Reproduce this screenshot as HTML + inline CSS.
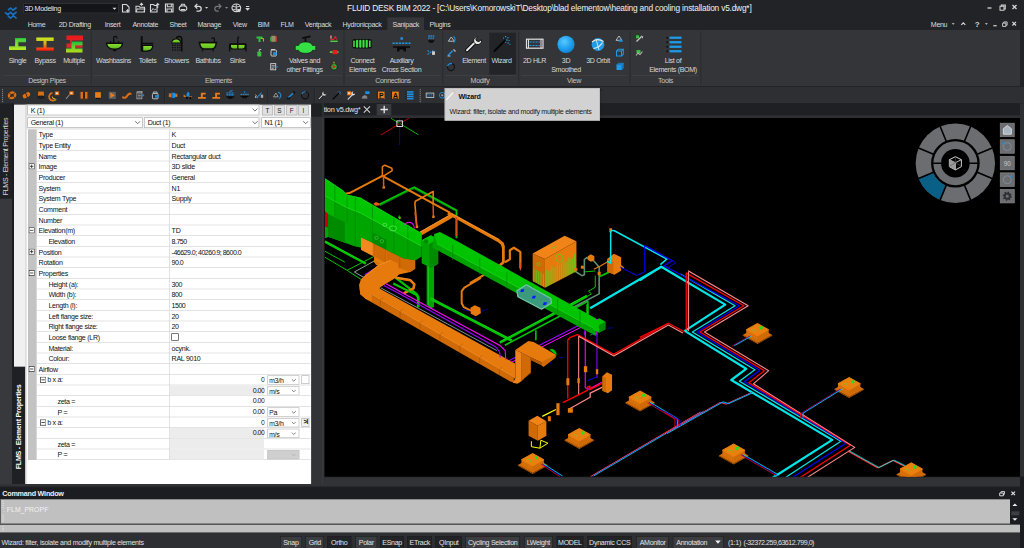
<!DOCTYPE html>
<html lang="en">
<head>
<meta charset="utf-8">
<title>FLUID DESK BIM 2022</title>
<style>
*{box-sizing:border-box;margin:0;padding:0}
html,body{width:1024px;height:548px;overflow:hidden;background:#212327}
body{font-family:"Liberation Sans",sans-serif;font-size:12px;color:#e4e4e4}
#root{position:absolute;left:0;top:0;width:1536px;height:822px;transform:scale(.666667);transform-origin:0 0;background:#212327;overflow:hidden}
.abs{position:absolute}
/* ---------- title ---------- */
#title{position:absolute;left:0;top:0;width:1536px;height:45px;background:#212327}
#wscombo{position:absolute;left:35px;top:4px;width:143px;height:16px;background:#141518;border:1px solid #3c3d40;color:#e8e8e8;font-size:12px;line-height:14px;padding-left:2px}
#apptitle{position:absolute;left:592px;top:4px;font-size:13.5px;color:#f0f0f0;white-space:nowrap;letter-spacing:-.1px}
.mtab{position:absolute;top:27.3px;height:19px;line-height:19px;font-size:10.6px;letter-spacing:-.5px;color:#dcdcdc;white-space:nowrap;text-align:center}
/* ---------- ribbon ---------- */
#ribbon{position:absolute;left:0;top:45px;width:1530px;height:84px;background:#343538}
.rlab{position:absolute;font-size:10.6px;letter-spacing:-.5px;color:#d9d9d9;white-space:nowrap;text-align:center;line-height:16px;transform:translateX(-50%)}
.plab{position:absolute;top:67px;font-size:12px;color:#c8c8c8;white-space:nowrap;text-align:center;line-height:16px;transform:translateX(-50%)}
.psep{position:absolute;top:2px;width:2px;height:80px;background:#2c2d30}
.rlab.pl{color:#c4c4c4}
.pline{position:absolute;top:68px;height:1px;background:#444548}
/* ---------- toolbar ---------- */
#toolbar{position:absolute;left:0;top:129px;width:1536px;height:26px;background:#2e2f32;border-top:1px solid #1e1f22}
/* ---------- left panel ---------- */
#lpanel{position:absolute;left:0;top:155px;width:485px;height:576px;background:#38393c}
.vtab{position:absolute;color:#e0e0e0;font-size:12px;white-space:nowrap;transform-origin:0 0;transform:rotate(-90deg)}
#pgrid{position:absolute;left:42px;top:195px;width:424px;font-size:11.5px;color:#111}
.row{position:relative;height:16px;border-bottom:1px solid #d8d8d8;background:#fff;margin-left:13px;line-height:15px;white-space:nowrap}
.row .n{position:absolute;left:0;top:0;width:199px;height:15px;border-right:1px solid #d8d8d8;padding-left:9px;overflow:hidden}
.row .v{position:absolute;left:199px;top:0;right:0;height:15px;padding-left:4px;overflow:hidden}
.row .n.i1{padding-left:24px}
.row .n.i2{padding-left:40px}
.pm{position:absolute;left:-11px;top:3px;width:9px;height:9px;border:1px solid #555;background:#fff}
.pm:before{content:"";position:absolute;left:1px;top:3px;width:5px;height:1px;background:#333}
.pm.plus:after{content:"";position:absolute;left:3px;top:1px;width:1px;height:5px;background:#333}
.num{letter-spacing:-.8px}
.gt{font-size:10.6px;letter-spacing:-.42px;color:#111;overflow:hidden}
/* ---------- status ---------- */
.sbtn{position:absolute;top:803px;height:18px;line-height:18px;font-size:11.5px;color:#e6e6e6;background:#3f4043;text-align:center;white-space:nowrap}
</style>
</head>
<body>
<div id="root">

<!-- TITLE -->
<div id="title">
<svg style="position:absolute;left:6px;top:9px;overflow:visible" width="21" height="21" viewBox="0 0 14 14" ><g fill="none" stroke="#1673c4" stroke-width="1.600" stroke-linejoin="miter"><path d="M4 4.200 6.500 2 9 4.200 12.600 1.500"/><path d="M1 6.300 3.800 8.700 6.500 6.300 9.200 8.700 12.600 5.900"/><path d="M4 9.900 6.500 12.100 9.300 9.700 12.600 12.400"/></g></svg>
<div style="position:absolute;left:34.5px;top:4.5px;width:143.25px;height:15.75px;background:#141518;border:1px solid #3a3b3e"></div>
<div id="wstext" style="position:absolute;left:36.75px;top:3.9px;font-size:10.6px;line-height:16.5px;color:#ececec;white-space:nowrap;letter-spacing:-.45px">3D Modeling</div>
<svg style="position:absolute;left:168px;top:10.5px;overflow:visible" width="7.5" height="4.5" viewBox="0 0 5 3" ><path d="M0.5 0.5h4l-2 2z" fill="#e0e0e0"/></svg>
<svg style="position:absolute;left:0px;top:0px;overflow:visible" width="390" height="24" viewBox="0 0 260 16" ><path d="M122.5 4.5h4l2.5 2.5v5h-6.5z" fill="none" stroke="#d6d6d6" stroke-width="1.1"/><path d="M127.5 9.2v3M126 10.7h3" stroke="#d6d6d6" stroke-width="1"/><path d="M136 12V6.3h3l1 1h4.5V12z" fill="none" stroke="#d6d6d6" stroke-width="1.1"/><path d="M141.5 5.8V3.5M140 4.8l1.5-1.5 1.5 1.5" stroke="#d6d6d6" stroke-width="1" fill="none"/><path d="M136 12l1.2-3h7.6L144 12" fill="none" stroke="#d6d6d6" stroke-width="1"/><path d="M150.5 12V4.5h3l1 1h2.5V12z" fill="none" stroke="#d6d6d6" stroke-width="1.1"/><path d="M157.7 8V3.6M156.2 5l1.5-1.5 1.5 1.5" stroke="#d6d6d6" stroke-width="1" fill="none"/><path d="M151 11.5l2-3 1.5 1.5 1.5-1" stroke="#d6d6d6" stroke-width=".9" fill="none"/><path d="M165.5 4h7.5v8h-7.5z" fill="none" stroke="#d6d6d6" stroke-width="1.2"/><path d="M167.3 4v2.8h4V4M167 12V9h4.6v3" fill="none" stroke="#d6d6d6" stroke-width="1"/><ellipse cx="183" cy="8.3" rx="3.8" ry="2.6" fill="none" stroke="#d6d6d6" stroke-width="1.1"/><path d="M180.6 6.5l1-2.3h2.8l1 2.3M181 9.5h4" fill="none" stroke="#d6d6d6" stroke-width="1"/><path d="M195.5 6.3h3.3a2.4 2.4 0 0 1 0 4.8h-2.3" fill="none" stroke="#d6d6d6" stroke-width="1.3"/><path d="M197.3 4 195 6.3l2.3 2.3" fill="none" stroke="#d6d6d6" stroke-width="1.3"/><path d="M205 7h3.2l-1.6 1.8z" fill="#cfcfcf"/><path d="M220.5 6.3h-3.3a2.4 2.4 0 0 0 0 4.8h1.5" fill="none" stroke="#77787b" stroke-width="1.2"/><path d="M218.7 4 221 6.3l-2.3 2.3" fill="none" stroke="#77787b" stroke-width="1.2"/><path d="M225 7h3.2l-1.6 1.8z" fill="#8a8b8e"/><ellipse cx="236.3" cy="7.8" rx="4.3" ry="3.8" fill="none" stroke="#d6d6d6" stroke-width="1.2"/><path d="M232.5 6.3q3.8 1.6 7.6 0M233 9.8q3.3-1.6 6.6 0M236.3 4v7.6" fill="none" stroke="#d6d6d6" stroke-width=".9"/><circle cx="239" cy="10.6" r="1.7" fill="#d6d6d6"/><path d="M246 6.5h3.2M246.3 8.6h2.6l-1.3 1.5z" stroke="#d6d6d6" stroke-width="1" fill="#d6d6d6"/></svg>
<div id="apptitle" style="position:absolute;left:520.5px;top:3.3px;font-size:12.5px;line-height:19.5px;color:#f2f2f2;white-space:nowrap;letter-spacing:-.3px">FLUID DESK BIM 2022 - [C:\Users\KomorowskiT\Desktop\blad elementow\heating and cooling installation v5.dwg*]</div>
<svg style="position:absolute;left:1470px;top:0px;overflow:visible" width="66" height="24" viewBox="0 0 44 16" ><path d="M7.5 8h4" stroke="#d6d6d6" stroke-width="1.3"/><path d="M20 6.3h4v4h-4z M21.3 6.3V5h4v4h-1.3" fill="none" stroke="#d6d6d6" stroke-width="1"/><path d="M32.5 5l4 4m0-4l-4 4" stroke="#d6d6d6" stroke-width="1.3"/></svg>
<div style="position:absolute;left:581.25px;top:25.95px;width:54.75px;height:19.5px;background:#343538"></div>
<div class="mtab" id="mt0" style="left:54.75px;transform:translateX(-50%)">Home</div>
<div class="mtab" id="mt1" style="left:112.2px;transform:translateX(-50%)">2D Drafting</div>
<div class="mtab" id="mt2" style="left:168.75px;transform:translateX(-50%)">Insert</div>
<div class="mtab" id="mt3" style="left:217.95px;transform:translateX(-50%)">Annotate</div>
<div class="mtab" id="mt4" style="left:267px;transform:translateX(-50%)">Sheet</div>
<div class="mtab" id="mt5" style="left:313.95px;transform:translateX(-50%)">Manage</div>
<div class="mtab" id="mt6" style="left:359.7px;transform:translateX(-50%)">View</div>
<div class="mtab" id="mt7" style="left:395.25px;transform:translateX(-50%)">BIM</div>
<div class="mtab" id="mt8" style="left:430.5px;transform:translateX(-50%)">FLM</div>
<div class="mtab" id="mt9" style="left:477px;transform:translateX(-50%)">Ventpack</div>
<div class="mtab" id="mt10" style="left:543px;transform:translateX(-50%)">Hydronicpack</div>
<div class="mtab" id="mt11" style="left:608.55px;transform:translateX(-50%)">Sanipack</div>
<div class="mtab" id="mt12" style="left:660px;transform:translateX(-50%)">Plugins</div>
<div class="mtab" id="mtmenu" style="left:1408.5px;transform:translateX(-50%)">Menu</div>
<svg style="position:absolute;left:1422px;top:25.5px;overflow:visible" width="114" height="19.5" viewBox="0 0 76 13" ><path d="M3.700 5.800h3l-1.500 1.600z" fill="#d6d6d6"/><path d="M13.300 7.600l2-2 2 2" fill="none" stroke="#d6d6d6" stroke-width="1.200"/><text x="26.800" y="9.600" font-family="Liberation Sans,sans-serif" font-size="8" font-weight="bold" fill="#d6d6d6">?</text><path d="M36.900 5.800h3l-1.500 1.600z" fill="#d6d6d6"/><path d="M45.300 8.400h3.400" stroke="#d6d6d6" stroke-width="1.200"/><path d="M54.600 5.800h3.300v3.300h-3.300z M55.800 5.800V4.600h3.300v3.300h-1.200" fill="none" stroke="#d6d6d6" stroke-width=".9"/><path d="M64.400 4.600l3.600 3.600m0-3.600l-3.600 3.600" stroke="#d6d6d6" stroke-width="1.200"/></svg>
</div>

<!-- RIBBON -->
<div id="ribbon">
<div style="position:absolute;left:733.5px;top:3.75px;width:40.5px;height:63px;background:#232427"></div>
<div class="psep" style="left:135.75px"></div>
<div class="psep" style="left:515.25px"></div>
<div class="psep" style="left:663px"></div>
<div class="psep" style="left:777px"></div>
<div class="psep" style="left:943.5px"></div>
<div class="psep" style="left:1050px"></div>
<div class="pline" style="left:4.5px;width:129px"></div>
<div class="pline" style="left:139.5px;width:373.5px"></div>
<div class="pline" style="left:519px;width:141px"></div>
<div class="pline" style="left:667.5px;width:106.5px"></div>
<div class="pline" style="left:781.5px;width:159px"></div>
<div class="pline" style="left:948px;width:99px"></div>
<div class="rlab" style="left:26.25px;top:45.75px;margin-top:-8px">Single</div>
<div class="rlab" style="left:67.5px;top:45.75px;margin-top:-8px">Bypass</div>
<div class="rlab" style="left:111px;top:45.75px;margin-top:-8px">Multiple</div>
<div class="rlab" style="left:170.25px;top:45.75px;margin-top:-8px">Washbasins</div>
<div class="rlab" style="left:221.25px;top:45.75px;margin-top:-8px">Toilets</div>
<div class="rlab" style="left:264.75px;top:45.75px;margin-top:-8px">Showers</div>
<div class="rlab" style="left:312px;top:45.75px;margin-top:-8px">Bathtubs</div>
<div class="rlab" style="left:356.25px;top:45.75px;margin-top:-8px">Sinks</div>
<div class="rlab" style="left:711px;top:45.75px;margin-top:-8px">Element</div>
<div class="rlab" style="left:752.25px;top:45.75px;margin-top:-8px">Wizard</div>
<div class="rlab" style="left:801.75px;top:45.75px;margin-top:-8px">2D HLR</div>
<div class="rlab" style="left:897px;top:45.75px;margin-top:-8px">3D Orbit</div>
<div class="rlab" style="left:456.75px;top:45.75px;margin-top:-8px">Valves and</div>
<div class="rlab" style="left:456.75px;top:58.5px;margin-top:-8px">other Fittings</div>
<div class="rlab" style="left:543.75px;top:45.75px;margin-top:-8px">Connect</div>
<div class="rlab" style="left:543.75px;top:58.5px;margin-top:-8px">Elements</div>
<div class="rlab" style="left:602.25px;top:45.75px;margin-top:-8px">Auxiliary</div>
<div class="rlab" style="left:602.25px;top:58.5px;margin-top:-8px">Cross Section</div>
<div class="rlab" style="left:849px;top:45.75px;margin-top:-8px">3D</div>
<div class="rlab" style="left:849px;top:58.5px;margin-top:-8px">Smoothed</div>
<div class="rlab" style="left:1009.5px;top:45.75px;margin-top:-8px">List of</div>
<div class="rlab" style="left:1009.5px;top:58.5px;margin-top:-8px">Elements (BOM)</div>
<div class="rlab pl" style="left:70.5px;top:75.75px;margin-top:-8px">Design Pipes</div>
<div class="rlab pl" style="left:327.75px;top:75.75px;margin-top:-8px">Elements</div>
<div class="rlab pl" style="left:589.5px;top:75.75px;margin-top:-8px">Connections</div>
<div class="rlab pl" style="left:720px;top:75.75px;margin-top:-8px">Modify</div>
<div class="rlab pl" style="left:861px;top:75.75px;margin-top:-8px">View</div>
<div class="rlab pl" style="left:998.25px;top:75.75px;margin-top:-8px">Tools</div>
<svg style="position:absolute;left:0;top:0" width="1536" height="84" viewBox="0 30 1024 56"><defs>
<linearGradient id="gG" x1="0" y1="0" x2="0" y2="1"><stop offset="0" stop-color="#22c33a"/><stop offset="1" stop-color="#b8e61c"/></linearGradient>
<linearGradient id="gYR" x1="0" y1="0" x2="0" y2="1"><stop offset="0" stop-color="#c6ee20"/><stop offset=".5" stop-color="#e0a018"/><stop offset="1" stop-color="#ff1010"/></linearGradient>
<linearGradient id="gR" x1="0" y1="0" x2="0" y2="1"><stop offset="0" stop-color="#f01818"/><stop offset="1" stop-color="#c83030"/></linearGradient>
<linearGradient id="gB" x1="0" y1="0" x2="0" y2="1"><stop offset="0" stop-color="#8fe030"/><stop offset="1" stop-color="#58b820"/></linearGradient>
<radialGradient id="gS" cx=".4" cy=".35" r=".7"><stop offset="0" stop-color="#5cc8ff"/><stop offset=".6" stop-color="#1da0f0"/><stop offset="1" stop-color="#1080d0"/></radialGradient>
</defs><path d="M9 46.3h6V38h11v4.3h-7.6v4H26v3.8H9z" fill="url(#gG)"/><path d="M9 48.2h17M16.7 46.5V40h9.3" stroke="#d8f060" stroke-width=".5" fill="none" opacity=".7"/><path d="M36.3 37.6h17.4v3.4h-7.2v6.4h7.2v3.4H36.3v-3.4h7.2V41h-7.2z" fill="url(#gYR)"/><path d="M66.5 36h16v4h-11v3.2h11v4.6h-16v-4.4h3.6v-3.4h-3.6z" fill="url(#gR)"/><path d="M66 48.6h5.5v-7h11v3.6h-7.4v3.4h7.4v3.8H66z" fill="url(#gG)" opacity=".95"/><path d="M66.5 36h16v4h-11v3.5" fill="none" stroke="#e82020" stroke-width="1"/><path d="M106.5 43.2h16q-.6 6-8 6t-8-6z" fill="url(#gB)" stroke="#0c0c0c" stroke-width="1.4"/><path d="M113.7 43v-5.2q0-1.5 1.6-1.5t1.6 1.5v.8M110.5 41v1.6M118.5 41v1.6M113 50.6h3.2" fill="none" stroke="#0c0c0c" stroke-width="1.3"/><path d="M141.7 36.2v15.2" stroke="#0c0c0c" stroke-width="2"/><path d="M141.5 43.5h11.7" stroke="#0c0c0c" stroke-width="1.5"/><path d="M142.6 45.3h10.2q-.3 5.8-6 5.8h-4.2z" fill="url(#gB)" stroke="#0c0c0c" stroke-width="1.3"/><path d="M181.8 51.5V39q0-2.6-2.6-2.6t-2.8 2.4" fill="none" stroke="#0c0c0c" stroke-width="1.5"/><path d="M171.6 43q.4-4 4.6-4t4.6 4z" fill="url(#gB)" stroke="#0c0c0c" stroke-width="1"/><g fill="#0c0c0c"><rect x="172" y="44.6" width="1.3" height="1.3"/><rect x="174.5" y="44.6" width="1.3" height="1.3"/><rect x="177" y="44.6" width="1.3" height="1.3"/><rect x="179.4" y="44.6" width="1.3" height="1.3"/><rect x="172" y="47" width="1.3" height="1.3"/><rect x="174.5" y="47" width="1.3" height="1.3"/><rect x="177" y="47" width="1.3" height="1.3"/><rect x="179.4" y="47" width="1.3" height="1.3"/><rect x="172" y="49.4" width="1.3" height="1.3"/><rect x="174.5" y="49.4" width="1.3" height="1.3"/><rect x="177" y="49.4" width="1.3" height="1.3"/><rect x="179.4" y="49.4" width="1.3" height="1.3"/></g><path d="M199.6 42.6h16.6q-.4 6.4-4.6 6.4h-7.2q-4.4 0-4.8-6.4z" fill="url(#gB)" stroke="#0c0c0c" stroke-width="1.4"/><path d="M214.4 42.4v-3.3q0-1.2-1.3-1.2t-1.3 1.2M203 49.4l-.8 1.8M212.8 49.4l.8 1.8M198.6 42.5h18.6" fill="none" stroke="#0c0c0c" stroke-width="1.3"/><path d="M230.4 44.2h14.8v2.2q0 2.6-2.8 2.6h-9.200q-2.800 0-2.800-2.600z" fill="url(#gB)" stroke="#0c0c0c" stroke-width="1.2"/><path d="M237.800 49V38.400q0-1.600 1.400-1.600M229.600 51.600v-7.600M246 51.600v-7.600M229.200 44.100h17.200M237.800 51.200" fill="none" stroke="#0c0c0c" stroke-width="1.300"/><path d="M256.5 36.500h6v2h-2v3.500h-2v-3.500h-2z" fill="#30c040"/><path d="M261 38.500h2.500v3" stroke="#d0d020" stroke-width=".8" fill="none"/><rect x="257.300" y="51.500" width="4" height="5" rx=".8" fill="#38c040"/><path d="M259.300 51.500v-2h2" stroke="#d8d8d8" stroke-width=".8" fill="none"/><rect x="271.200" y="35.800" width="4.600" height="6" rx=".6" fill="#e07818"/><path d="M272.700 36v5.600M274.200 36v5.600" stroke="#30b0e0" stroke-width=".6"/><path d="M276.400 36.500v5" stroke="#e03030" stroke-width="1"/><path d="M270.600 37v4.400" stroke="#40c040" stroke-width=".8"/><rect x="271" y="50" width="5.400" height="6" rx=".8" fill="none" stroke="#d8d8d8" stroke-width=".9"/><rect x="273" y="52.200" width="3.600" height="3" fill="#1d8fe0"/><path d="M271 49.500h4" stroke="#d8d8d8" stroke-width=".9"/><rect x="270.700" y="63.600" width="5" height="6.200" fill="none" stroke="#d0d0d0" stroke-width=".9"/><path d="M271.600 65.400h3.200M271.600 67h3.200M271.600 68.500h2" stroke="#d0d0d0" stroke-width=".7"/><path d="M275.500 67.500l2.300-1" stroke="#1d8fe0" stroke-width="1"/><path d="M295.300 45.500h3.200q1.200-3.500 7-3.500t7 3.500h3.200v4.800h-3.200q-1.200 3-7 3t-7-3h-3.200z" fill="#34e044" stroke="#0c0c0c" stroke-width=".5"/><path d="M305.500 42v-3.600M302.300 38.200l8.200-1.800" stroke="#0c0c0c" stroke-width="1.700" fill="none"/><path d="M331 35.600v4h2.500l1.800-3 1.500 3" stroke="#e02828" stroke-width="1" fill="none"/><path d="M330.300 41.300h7.400" stroke="#50d040" stroke-width="1.400"/><path d="M331 35.600v3" stroke="#e8e8e8" stroke-width=".8"/><rect x="332.500" y="50" width="4.800" height="4.200" fill="#e02020"/><path d="M329.800 52.100h2.700" stroke="#50d040" stroke-width="1.800"/><path d="M337.300 52.100h1.200" stroke="#50d040" stroke-width="1.800"/><circle cx="334" cy="66.800" r="3.200" fill="#30b838" stroke="#0c0c0c" stroke-width=".6"/><path d="M332.600 64.800l3.600 2-3.600 2z" fill="#e02020"/><path d="M334 63.600v-1.800" stroke="#e0c020" stroke-width="1"/><rect x="352.300" y="39" width="19.500" height="9.600" rx="2" fill="#101010"/><g fill="#38e040"><rect x="353.200" y="40.600" width="1.600" height="6.400"/><rect x="356" y="39.800" width="2.200" height="8" rx="1"/><rect x="359.200" y="39.800" width="2.200" height="8" rx="1"/><rect x="362.400" y="39.800" width="2.200" height="8" rx="1"/><rect x="365.600" y="39.800" width="2.200" height="8" rx="1"/><rect x="369" y="40.600" width="1.600" height="6.400"/></g><rect x="400.500" y="37.300" width="2.400" height="2.400" fill="#1d9be8"/><path d="M392.500 43.300h18" stroke="#1d9be8" stroke-width="1.600" stroke-dasharray="2.200 1"/><path d="M393 46.200h17v1.600h-4v3.600h-2.500v-1.800h-4v1.800H397v-3.600h-4z" fill="#0a0a0a"/><path d="M428.300 36h6M428 38.200h6.600" stroke="#1d8fe0" stroke-width="1.300" stroke-dasharray="1.600 .600"/><path d="M428 40.300h6.500v1.200h-1.500v1.200h-3.500v-1.200H428z" fill="#0a0a0a"/><path d="M427.500 54.500l6.500-4.500M427.500 50.500l3 2" stroke="#1d8fe0" stroke-width="1" stroke-dasharray="1.800 .800"/><rect x="432" y="51.300" width="3" height="3.600" fill="#c8c8c8"/><path d="M448.300 41.200l3-4.200 3 4.200z" fill="none" stroke="#c8c8c8" stroke-width=".9"/><path d="M453.500 36.500a3.600 3.600 0 0 1 0 6" fill="none" stroke="#1d8fe0" stroke-width="1.100"/><path d="M448 55.500l4.600-4.600" stroke="#1d8fe0" stroke-width="1.500"/><path d="M447.500 56h3M453 50h2v2" stroke="#c8c8c8" stroke-width=".9" fill="none"/><circle cx="451" cy="67" r="3.500" fill="none" stroke="#15161a" stroke-width="1.300"/><path d="M447.600 66.200a3.500 3.500 0 0 1 4.300-2.600" fill="none" stroke="#1d8fe0" stroke-width="1.300"/><path d="M467 50.300l8.200-8.200" stroke="#0a0a0a" stroke-width="3.800" stroke-linecap="round"/><path d="M467 50.300l8.200-8.200" stroke="#e8e8e8" stroke-width="2" stroke-linecap="round"/><path d="M481.500 39.600a4 4 0 1 1-3.800-3l-2 2.400 1 2 2.200.600z" fill="#e8e8e8" stroke="#0a0a0a" stroke-width=".9"/><path d="M494.500 51l10.500-10.500" stroke="#050505" stroke-width="1.800" stroke-linecap="round"/><g fill="#2aa0e8"><rect x="505" y="36" width="1.200" height="1.200"/><rect x="507.300" y="37.200" width="1.200" height="1.200"/><rect x="503" y="37.600" width="1" height="1"/><rect x="506.200" y="39.400" width="1.300" height="1.300"/><rect x="508.600" y="40" width="1" height="1"/><rect x="507.600" y="42.400" width="1.200" height="1.200"/><rect x="509.400" y="43.800" width="1" height="1"/><rect x="505.200" y="41.800" width="1" height="1"/></g><rect x="526.500" y="39.200" width="16.500" height="9" fill="none" stroke="#e0e0e0" stroke-width="1.200"/><path d="M528.500 39.200v9M541 39.200v9" stroke="#e0e0e0" stroke-width="1"/><path d="M529.500 42h10.500M529.500 45.500h10.500" stroke="#1d9be8" stroke-width="1.100" stroke-dasharray="2 1"/><circle cx="566" cy="44.300" r="8.600" fill="url(#gS)"/><circle cx="598" cy="44.500" r="6.400" fill="#1d9be8"/><path d="M592 42q5-4.500 11.500-.500M593.500 48.500q6-1 9-6" stroke="#e8e8e8" stroke-width="1.200" fill="none"/><path d="M596 39l3 11" stroke="#e8e8e8" stroke-width=".9"/><path d="M616 40.300l3-4.300 3 4.300z" fill="none" stroke="#c8c8c8" stroke-width=".9"/><path d="M620.500 38.200l2.600 3.600h-4.800z" fill="#1d8fe0"/><path d="M616.500 51h5v5h-5zM616.500 51l1.800-1.800h5l-1.800 1.800M621.500 56l1.800-1.800v-5" fill="none" stroke="#1d9be8" stroke-width="1"/><path d="M616.500 65h5v5h-5z" fill="#1d9be8"/><path d="M616.500 65l1.800-1.800h5l-1.800 1.800zM621.500 70l1.800-1.800v-5l-1.800 1.800z" fill="#1470b8" stroke="#1d9be8" stroke-width=".500"/><path d="M636.500 41.500l5-5" stroke="#c8c8c8" stroke-width="1.300"/><rect x="636" y="35.300" width="3" height="3" fill="#38c040"/><path d="M641 36l1.800.6-.6 1.800" fill="none" stroke="#c8c8c8" stroke-width=".9"/><rect x="636.500" y="50" width="4" height="3" fill="#38c040"/><path d="M636 55.500l2-2.500 2 1.500 2.500-3" stroke="#b8b8b8" stroke-width="1" fill="none"/><rect x="666.500" y="37" width="1.600" height="1.600" fill="#0a0a0a"/><rect x="669.500" y="36.6" width="12" height="2.300" fill="#1d9be8"/><rect x="666.500" y="41.5" width="1.600" height="1.600" fill="#0a0a0a"/><rect x="669.500" y="41.1" width="12" height="2.300" fill="#1d9be8"/><rect x="666.500" y="46" width="1.600" height="1.600" fill="#0a0a0a"/><rect x="669.500" y="45.6" width="12" height="2.300" fill="#1d9be8"/><rect x="666.500" y="50.5" width="1.600" height="1.600" fill="#0a0a0a"/><rect x="669.500" y="50.1" width="12" height="2.300" fill="#1d9be8"/></svg>
</div>

<!-- TOOLBAR -->
<div id="toolbar">
<svg style="position:absolute;left:0;top:-1px" width="1536" height="27" viewBox="0 86 1024 18"><rect x="2.1" y="89.2" width="1" height="1" fill="#9a9a9a"/><rect x="2.1" y="91.2" width="1" height="1" fill="#9a9a9a"/><rect x="2.1" y="93.2" width="1" height="1" fill="#9a9a9a"/><rect x="2.1" y="95.2" width="1" height="1" fill="#9a9a9a"/><rect x="2.1" y="97.2" width="1" height="1" fill="#9a9a9a"/><rect x="2.1" y="99.2" width="1" height="1" fill="#9a9a9a"/><rect x="2.1" y="101.2" width="1" height="1" fill="#9a9a9a"/><rect x="419.7" y="89.2" width="1" height="1" fill="#9a9a9a"/><rect x="419.7" y="91.2" width="1" height="1" fill="#9a9a9a"/><rect x="419.7" y="93.2" width="1" height="1" fill="#9a9a9a"/><rect x="419.7" y="95.2" width="1" height="1" fill="#9a9a9a"/><rect x="419.7" y="97.2" width="1" height="1" fill="#9a9a9a"/><rect x="419.7" y="99.2" width="1" height="1" fill="#9a9a9a"/><rect x="419.7" y="101.2" width="1" height="1" fill="#9a9a9a"/><path d="M164.5 88v15" stroke="#1f2023" stroke-width="1"/><path d="M165.3 88v15" stroke="#3c3d40" stroke-width=".6"/><path d="M268 88v15" stroke="#1f2023" stroke-width="1"/><path d="M268.8 88v15" stroke="#3c3d40" stroke-width=".6"/><path d="M314.3 88v15" stroke="#1f2023" stroke-width="1"/><path d="M315.1 88v15" stroke="#3c3d40" stroke-width=".6"/><g transform="translate(12.1 95.3) scale(.8)"><ellipse rx="4" ry="3.300" transform="rotate(-25)" fill="none" stroke="#dc6e14" stroke-width="3"/><path d="M-3.6 3l2-1.8M1.8-1.6l2-1.800M-3.400-2.600l2.200 1.600M1.600 1.400l2.200 1.600" stroke="#0a0a0a" stroke-width=".8"/></g><g transform="translate(26.4 95.3) scale(.8)"><rect x="-5" y="-2.700" width="10" height="5.400" rx="2.700" transform="rotate(-30)" fill="#dc6e14"/><path d="M-1.200-3.200l2.400 5.800" stroke="#0a0a0a" stroke-width=".9"/></g><g transform="translate(41 95.3) scale(.8)"><rect x="-3.600" y="-4.600" width="7.200" height="5.400" fill="#dc6e14"/><path d="M-4.500 3.800l1.800-2.800h5.400l1.800 2.800M-2.500 3.600h5" stroke="#0a0a0a" stroke-width="1" fill="none"/></g><g transform="translate(55.3 95.3) scale(.8)"><path d="M-3.500-3a4.800 4.800 0 1 0 4.500 7.500" fill="none" stroke="#dc6e14" stroke-width="2.200"/><path d="M-3.800 1.500a3 3 0 0 0 3.500 3" stroke="#e8c020" stroke-width="1.200" fill="none"/><rect x="-.6" y="-4.800" width="5.400" height="4.600" fill="#dc6e14"/><rect x=".8" y="-3.600" width="2.400" height="2.200" fill="#f0e8e0"/></g><g transform="translate(69.7 95.3) scale(.8)"><rect x="-.5" y="-5" width="5.400" height="4.600" fill="#dc6e14"/><rect x=".8" y="-3.800" width="2.600" height="2.200" fill="#f4d8c0"/><path d="M-4.500 4.500l4-5" stroke="#b0b0b0" stroke-width="1.100"/><path d="M-4.800 2l1 1" stroke="#707070" stroke-width=".8"/></g><g transform="translate(84 95.3) scale(.8)"><rect x="-4.400" y="-4.200" width="3.400" height="8.400" fill="#dc6e14"/><rect x="1" y="-4.200" width="3.400" height="8.400" fill="#dc6e14"/><rect x="-1" y="-4.200" width="2" height="8.400" fill="#3a2410"/><path d="M-1 -3l2 2-2 2 2 2" stroke="#0a0a0a" stroke-width=".7" fill="none"/><rect x="-5.200" y="-5" width="10.400" height="10" fill="none" stroke="#55331a" stroke-width=".6"/></g><g transform="translate(98 95.3) scale(.8)"><rect x="-3.600" y="-3.900" width="7.200" height="7" fill="#e87c1c"/><path d="M-2.600 4h5.200" stroke="#0a0a0a" stroke-width="1"/></g><g transform="translate(112.3 95.3) scale(.8)"><rect x="-4.400" y="-4.400" width="8.800" height="8.800" fill="#5e5f62"/><path d="M-2.400-3.400l5.800 3.400-5.800 3.400z" fill="#e87c1c"/></g><g transform="translate(126.6 95.3) scale(.8)"><path d="M-4.500 2.500q3 2 5-1.500t4.500-3" fill="none" stroke="#dc6e14" stroke-width="2.600" stroke-linecap="round"/><path d="M-4 3.800q3 1 5-1.500" fill="none" stroke="#a04c10" stroke-width=".7"/></g><g transform="translate(140.6 95.3) scale(.8)"><rect x="-4.600" y="-4" width="6.200" height="8.400" fill="none" stroke="#b8b8b8" stroke-width=".9"/><path d="M-4.600-4.400h7.400M-3.200-1.800h3.400M-3.200.2h3.400M-3.200 2.200h3.400" stroke="#c8c8c8" stroke-width=".8"/><path d="M2.200-2.400l2.600 2.200-2.600 2.200z" fill="#1d8fe0"/></g><g transform="translate(155.3 95.3) scale(.8)"><rect x="-3.600" y="-2.200" width="7" height="6.600" rx="1" fill="none" stroke="#e0e0e0" stroke-width="1"/><path d="M-2.400-2.400v-1.800h4.600v1.800" fill="none" stroke="#e0e0e0" stroke-width=".9"/><rect x="-.4" y="-.2" width="4.400" height="3" fill="#1d8fe0"/></g><g transform="translate(173 95.3) scale(.8)"><rect x="-5.200" y="-2.400" width="3.200" height="4.800" fill="#dc6e14"/><rect x="-2" y="-3.200" width="4.600" height="6.400" fill="#1d8fe0"/><rect x="2.600" y="-2" width="2.800" height="4" fill="#dc6e14"/><path d="M-1-3.200v6.400" stroke="#105a98" stroke-width=".7"/></g><g transform="translate(187.6 95.3) scale(.8)"><path d="M-1.500-1l2-3.800 2.400 2.800z" fill="#1d8fe0"/><rect x="-1.400" y="-1.600" width="3.600" height="3.200" fill="#1d8fe0"/><path d="M-5 1.600h3M-5 -.6l2.400 2.400M2 1.800h3.400" stroke="#dc6e14" stroke-width="1.300"/><rect x="-1.800" y="2" width="2" height="2.800" fill="#0a0a0a"/><rect x="2.400" y="2" width="2" height="2.800" fill="#0a0a0a"/></g><g transform="translate(202 95.3) scale(.8)"><path d="M-5 4.300v-2.200h3.600v-5.200h6v2.200h-3.600v3h3.800v2.200z" fill="#e87c1c"/></g><g transform="translate(216.3 95.3) scale(.8)"><path d="M-5 4.300v-2.200h3.600v-5.200h6v2.200h-3.600v3h3.800v2.200z" fill="#e87c1c"/></g><g transform="translate(230.3 95.3) scale(.8)"><path d="M-4.800-2.800h9.600M-4.800-.6h9.600" stroke="#1d8fe0" stroke-width="1.400" stroke-dasharray="2.400 .600"/><path d="M-1-4.800l3.800-1.200" stroke="#1d8fe0" stroke-width="1.200"/><path d="M-5 1.200h10v1.400h-2.400v1.800h-5.200v-1.800h-2.400z" fill="#0a0a0a"/></g><g transform="translate(244.6 95.3) scale(.8)"><rect x="-.8" y="-4.800" width="1.600" height="1.600" fill="#1d8fe0"/><path d="M-5-1.200h10" stroke="#1d8fe0" stroke-width="1.400" stroke-dasharray="2 .800"/><path d="M-5 .8h10v1.200h-2.600v2h-1.600v-1h-1.600v1h-1.600v-2h-2.600z" fill="#0a0a0a"/></g><g transform="translate(259.2 95.3) scale(.8)"><path d="M-3 3.600l6-7.200" stroke="#1d8fe0" stroke-width="1.500" stroke-dasharray="2.200 .800"/><path d="M-5 -1l3 2.600" stroke="#9a9a9a" stroke-width="1"/><rect x="2" y="-.8" width="3" height="4" fill="#a8a8a8"/><rect x="-5.200" y=".6" width="1.600" height="2.800" fill="#a8a8a8"/></g><g transform="translate(277.2 95.3) scale(.8)"><path d="M-4.600 1.800l3-4.600 3 4.600z" fill="none" stroke="#b8b8b8" stroke-width=".9"/><path d="M1-4a4.600 4.600 0 0 1 1.400 8.400" fill="none" stroke="#1d8fe0" stroke-width="1.400"/><path d="M-4.800 3.200h6" stroke="#888" stroke-width=".7" stroke-dasharray="1 1"/></g><g transform="translate(290.9 95.3) scale(.8)"><path d="M-3 2.600l5.600-5.200" stroke="#1d8fe0" stroke-width="1.700"/><path d="M-5 4.200h3.400v-1.800M2.400-4.400h2.200v2.600" stroke="#0a0a0a" stroke-width="1.200" fill="none"/></g><g transform="translate(305.1 95.3) scale(.8)"><circle r="4.400" fill="none" stroke="#101114" stroke-width="1.400"/><path d="M-4.200-1.400a4.400 4.400 0 0 1 4.800-3" fill="none" stroke="#1d8fe0" stroke-width="1.400"/></g><g transform="translate(322.5 95.3) scale(.8)"><path d="M-4.400 4.400l5.200-5.200" stroke="#0a0a0a" stroke-width="2.600" stroke-linecap="round"/><path d="M-4.400 4.400l5.200-5.200" stroke="#e0e0e0" stroke-width="1.300" stroke-linecap="round"/><path d="M4.800-2.400a2.800 2.800 0 1 1-2.400-2.400l-1.200 1.600.6 1.400 1.600.400z" fill="#e0e0e0" stroke="#0a0a0a" stroke-width=".5"/></g><g transform="translate(336.8 95.3) scale(.8)"><path d="M-4.600 4.600l7-7" stroke="#050505" stroke-width="1.500" stroke-linecap="round"/><g fill="#1d8fe0"><rect x="2.400" y="-5.200" width="1" height="1"/><rect x="4" y="-4.400" width="1" height="1"/><rect x="3.200" y="-3" width="1.200" height="1.200"/><rect x="4.600" y="-2" width=".9" height=".9"/><rect x="1" y="-4.400" width=".9" height=".9"/></g></g><g transform="translate(351 95.3) scale(.8)"><rect x="-4.800" y="-5" width="5" height="5" fill="#e87c1c"/><rect x="-3.600" y="-3.800" width="2.400" height="2.400" fill="#f8d0a8"/><path d="M-3.600 4.800l5-5" stroke="#e0e0e0" stroke-width="1.300" stroke-linecap="round"/><path d="M5-2.600a2.400 2.400 0 1 1-2-2l-1 1.400.5 1.200 1.400.300z" fill="#e0e0e0"/></g><g transform="translate(365.7 95.3) scale(.8)"><rect x="-.6" y="-5" width="5.400" height="3.400" fill="#1d8fe0"/><path d="M-4.600 4.400q-1-3 1.600-3.400 1.200-2.600 3.400-.6 2 .2 1.600 4z" fill="#77787b"/><path d="M-3 3l1.400-2 1 1.600 1.200-1" stroke="#aaa" stroke-width=".6" fill="none"/></g><g transform="translate(381.2 95.3) scale(.8)"><rect x="-4.200" y="-4.600" width="8.400" height="9.200" fill="#e87c1c"/><g fill="#0a0a0a"><rect x="-5.400" y="-4.8" width="1" height="1"/><rect x="-5.400" y="-2.8" width="1" height="1"/><rect x="-5.400" y="-0.7999999999999998" width="1" height="1"/><rect x="-5.400" y="1.2000000000000002" width="1" height="1"/><rect x="-5.400" y="3.2" width="1" height="1"/></g><text x="0" y="3.300" text-anchor="middle" font-family="Liberation Sans,sans-serif" font-weight="bold" font-size="8.500" fill="#0a0a0a">P</text><path d="M-3.400 4h6.800" stroke="#0a0a0a" stroke-width=".8"/></g><g transform="translate(395.4 95.3) scale(.8)"><rect x="-4.200" y="-4.600" width="8.400" height="9.200" fill="#e87c1c"/><g fill="#0a0a0a"><rect x="-5.400" y="-4.8" width="1" height="1"/><rect x="-5.400" y="-2.8" width="1" height="1"/><rect x="-5.400" y="-0.7999999999999998" width="1" height="1"/><rect x="-5.400" y="1.2000000000000002" width="1" height="1"/><rect x="-5.400" y="3.2" width="1" height="1"/></g><text x="0" y="3.300" text-anchor="middle" font-family="Liberation Sans,sans-serif" font-weight="bold" font-size="8.500" fill="#0a0a0a">A</text><path d="M-3.400 4h6.800" stroke="#0a0a0a" stroke-width=".8"/></g><g transform="translate(409.7 95.3) scale(.8)"><rect x="-5.200" y="-4.7" width="1" height="1" fill="#0a0a0a"/><rect x="-3.400" y="-5.2" width="8.200" height="2" fill="#1d8fe0"/><rect x="-5.200" y="-1.9" width="1" height="1" fill="#0a0a0a"/><rect x="-3.400" y="-2.4" width="8.200" height="2" fill="#1d8fe0"/><rect x="-5.200" y="0.9" width="1" height="1" fill="#0a0a0a"/><rect x="-3.400" y="0.4" width="8.200" height="2" fill="#1d8fe0"/><rect x="-5.200" y="3.7" width="1" height="1" fill="#0a0a0a"/><rect x="-3.400" y="3.2" width="8.200" height="2" fill="#1d8fe0"/></g><g transform="translate(430 95.3) scale(.8)"><rect x="-4.800" y="-2.800" width="9.600" height="5.600" fill="none" stroke="#e0e0e0" stroke-width=".9"/><path d="M-3.400-.8h6.800M-3.400 1h6.800" stroke="#1d8fe0" stroke-width=".9" stroke-dasharray="1.600 .700"/></g><g transform="translate(442.3 95.3) scale(.8)"><circle r="3.600" fill="none" stroke="#1d8fe0" stroke-width="1.200"/><circle r="1.400" fill="#9a9a9a"/></g></svg>
</div>

<!-- LEFT PANEL -->
<div id="lpanel">
<div style="position:absolute;left:0px;top:0.1px;width:18.45px;height:571.5px;background:#38393c"></div>
<div style="position:absolute;left:0px;top:0.1px;width:18.45px;height:142.95px;background:#1f2023"></div>
<div class="vtab" id="vt1" style="left:1.5px;top:138.25px;font-size:10.6px;letter-spacing:-.45px;color:#d8d8d8">FLMS - Element Properties</div>
<div style="position:absolute;left:18.45px;top:0.1px;width:3px;height:571.5px;background:#1b1c1f"></div>
<div style="position:absolute;left:21px;top:1.9px;width:445.5px;height:569.1px;background:#f0f0f0"></div>
<div style="position:absolute;left:18.45px;top:394.9px;width:19.5px;height:177px;background:#1f2023"></div>
<div class="vtab" id="vt2" style="left:21.9px;top:549.25px;font-size:10.6px;letter-spacing:-.3px;color:#fff;font-weight:bold">FLMS - Element Properties</div>
<div style="position:absolute;left:37.5px;top:1.9px;width:2.4px;height:569.1px;background:#d4d4d4"></div>
<div style="position:absolute;left:39.9px;top:37.9px;width:426.6px;height:533.1px;background:#fff"></div>
<div style="position:absolute;left:40.95px;top:1.9px;width:348.3px;height:16.2px;background:#fff;border:1px solid #adadad;font-size:10.6px;letter-spacing:-.45px;color:#111;line-height:14.20px;padding-left:4px;white-space:nowrap"><span id="cbK">K (1)</span><svg style="position:absolute;right:1.5px;top:50%;margin-top:-3px" width="9" height="6" viewBox="0 0 9 6"><path d="M.7 .8l3.800 3.800 3.800-3.800" fill="none" stroke="#444" stroke-width="1.100"/></svg></div>
<div style="position:absolute;left:40.95px;top:21.1px;width:172.95px;height:15.6px;background:#fff;border:1px solid #adadad;font-size:10.6px;letter-spacing:-.45px;color:#111;line-height:13.60px;padding-left:4px;white-space:nowrap"><span id="cbG">General (1)</span><svg style="position:absolute;right:1.5px;top:50%;margin-top:-3px" width="9" height="6" viewBox="0 0 9 6"><path d="M.7 .8l3.800 3.800 3.800-3.800" fill="none" stroke="#444" stroke-width="1.100"/></svg></div>
<div style="position:absolute;left:216.45px;top:21.1px;width:172.8px;height:15.6px;background:#fff;border:1px solid #adadad;font-size:10.6px;letter-spacing:-.45px;color:#111;line-height:13.60px;padding-left:4px;white-space:nowrap"><span id="cbD">Duct (1)</span><svg style="position:absolute;right:1.5px;top:50%;margin-top:-3px" width="9" height="6" viewBox="0 0 9 6"><path d="M.7 .8l3.800 3.800 3.800-3.800" fill="none" stroke="#444" stroke-width="1.100"/></svg></div>
<div style="position:absolute;left:391.8px;top:21.1px;width:73.8px;height:15.6px;background:#fff;border:1px solid #adadad;font-size:10.6px;letter-spacing:-.45px;color:#111;line-height:13.60px;padding-left:4px;white-space:nowrap"><span id="cbN">N1 (1)</span><svg style="position:absolute;right:1.5px;top:50%;margin-top:-3px" width="9" height="6" viewBox="0 0 9 6"><path d="M.7 .8l3.800 3.800 3.800-3.800" fill="none" stroke="#444" stroke-width="1.100"/></svg></div>
<div style="position:absolute;left:393px;top:2.5px;width:16.2px;height:15.9px;background:#e1e1e1;border:1px solid #adadad;font-size:9.6px;color:#222;text-align:center;line-height:13.90px">T</div>
<div style="position:absolute;left:410.85px;top:2.5px;width:16.2px;height:15.9px;background:#e1e1e1;border:1px solid #adadad;font-size:9.6px;color:#222;text-align:center;line-height:13.90px">S</div>
<div style="position:absolute;left:429.45px;top:2.5px;width:16.2px;height:15.9px;background:#e1e1e1;border:1px solid #adadad;font-size:9.6px;color:#222;text-align:center;line-height:13.90px">F</div>
<div style="position:absolute;left:447.15px;top:2.5px;width:16.2px;height:15.9px;background:#e1e1e1;border:1px solid #adadad;font-size:9.6px;color:#222;text-align:center;line-height:13.90px">I</div>
<div style="position:absolute;left:41.4px;top:38.2px;width:424.5px;height:496.92px;background:#fff;border-top:1px solid #cfcfcf"></div>
<div style="position:absolute;left:41.7px;top:38.8px;width:13.2px;height:496.02px;background:#c3c3c3"></div>
<div style="position:absolute;left:253.5px;top:38.8px;width:1.01px;height:496.02px;background:#d4d4d4"></div>
<div style="position:absolute;left:54.9px;top:53.8px;width:411.6px;height:1.01px;background:#d6d6d6"></div>
<div class="gt" style="position:absolute;left:57.9px;top:39.02px;width:195px;height:16px;line-height:16px;white-space:nowrap"><span class="gn">Type</span></div>
<div class="gt" style="position:absolute;left:257.4px;top:39.02px;width:207px;height:16px;line-height:16px;white-space:nowrap"><span class="gv">K</span></div>
<div style="position:absolute;left:54.9px;top:69.8px;width:411.6px;height:1.01px;background:#d6d6d6"></div>
<div class="gt" style="position:absolute;left:57.9px;top:55.03px;width:195px;height:16px;line-height:16px;white-space:nowrap"><span class="gn">Type Entity</span></div>
<div class="gt" style="position:absolute;left:257.4px;top:55.03px;width:207px;height:16px;line-height:16px;white-space:nowrap"><span class="gv">Duct</span></div>
<div style="position:absolute;left:54.9px;top:85.8px;width:411.6px;height:1.01px;background:#d6d6d6"></div>
<div class="gt" style="position:absolute;left:57.9px;top:71.03px;width:195px;height:16px;line-height:16px;white-space:nowrap"><span class="gn">Name</span></div>
<div class="gt" style="position:absolute;left:257.4px;top:71.03px;width:207px;height:16px;line-height:16px;white-space:nowrap"><span class="gv">Rectangular duct</span></div>
<div style="position:absolute;left:54.9px;top:101.8px;width:411.6px;height:1.01px;background:#d6d6d6"></div>
<div class="gt" style="position:absolute;left:57.9px;top:87.03px;width:195px;height:16px;line-height:16px;white-space:nowrap"><span class="gn">Image</span></div>
<div class="gt" style="position:absolute;left:257.4px;top:87.03px;width:207px;height:16px;line-height:16px;white-space:nowrap"><span class="gv">3D slide</span></div>
<svg style="position:absolute;left:42.9px;top:90.1px" width="9" height="9" viewBox="0 0 9 9"><rect x=".5" y=".5" width="8" height="8" fill="#fff" stroke="#2a2a2a" stroke-width="1.1"/><g stroke="#111" stroke-width="1.1"><path d="M2 4.500h5"/><path d="M4.500 2v5"/></g></svg>
<div style="position:absolute;left:54.9px;top:117.8px;width:411.6px;height:1.01px;background:#d6d6d6"></div>
<div class="gt" style="position:absolute;left:57.9px;top:103.03px;width:195px;height:16px;line-height:16px;white-space:nowrap"><span class="gn">Producer</span></div>
<div class="gt" style="position:absolute;left:257.4px;top:103.03px;width:207px;height:16px;line-height:16px;white-space:nowrap"><span class="gv">General</span></div>
<div style="position:absolute;left:54.9px;top:133.8px;width:411.6px;height:1.01px;background:#d6d6d6"></div>
<div class="gt" style="position:absolute;left:57.9px;top:119.03px;width:195px;height:16px;line-height:16px;white-space:nowrap"><span class="gn">System</span></div>
<div class="gt" style="position:absolute;left:257.4px;top:119.03px;width:207px;height:16px;line-height:16px;white-space:nowrap"><span class="gv">N1</span></div>
<div style="position:absolute;left:54.9px;top:149.8px;width:411.6px;height:1.01px;background:#d6d6d6"></div>
<div class="gt" style="position:absolute;left:57.9px;top:135.03px;width:195px;height:16px;line-height:16px;white-space:nowrap"><span class="gn">System Type</span></div>
<div class="gt" style="position:absolute;left:257.4px;top:135.03px;width:207px;height:16px;line-height:16px;white-space:nowrap"><span class="gv">Supply</span></div>
<div style="position:absolute;left:54.9px;top:165.8px;width:411.6px;height:1.01px;background:#d6d6d6"></div>
<div class="gt" style="position:absolute;left:57.9px;top:151.03px;width:195px;height:16px;line-height:16px;white-space:nowrap"><span class="gn">Comment</span></div>
<div style="position:absolute;left:54.9px;top:181.8px;width:411.6px;height:1.01px;background:#d6d6d6"></div>
<div class="gt" style="position:absolute;left:57.9px;top:167.03px;width:195px;height:16px;line-height:16px;white-space:nowrap"><span class="gn">Number</span></div>
<div style="position:absolute;left:54.9px;top:197.8px;width:411.6px;height:1.01px;background:#d6d6d6"></div>
<div class="gt" style="position:absolute;left:57.9px;top:183.03px;width:195px;height:16px;line-height:16px;white-space:nowrap"><span class="gn">Elevation(m)</span></div>
<div class="gt" style="position:absolute;left:257.4px;top:183.03px;width:207px;height:16px;line-height:16px;white-space:nowrap"><span class="gv">TD</span></div>
<svg style="position:absolute;left:42.9px;top:186.1px" width="9" height="9" viewBox="0 0 9 9"><rect x=".5" y=".5" width="8" height="8" fill="#fff" stroke="#2a2a2a" stroke-width="1.1"/><g stroke="#111" stroke-width="1.1"><path d="M2 4.500h5"/></g></svg>
<div style="position:absolute;left:54.9px;top:213.8px;width:411.6px;height:1.01px;background:#d6d6d6"></div>
<div class="gt" style="position:absolute;left:72.6px;top:199.03px;width:195px;height:16px;line-height:16px;white-space:nowrap"><span class="gn">Elevation</span></div>
<div class="gt" style="position:absolute;left:257.4px;top:199.03px;width:207px;height:16px;line-height:16px;white-space:nowrap"><span class="gv num">8.750</span></div>
<div style="position:absolute;left:54.9px;top:229.8px;width:411.6px;height:1.01px;background:#d6d6d6"></div>
<div class="gt" style="position:absolute;left:57.9px;top:215.03px;width:195px;height:16px;line-height:16px;white-space:nowrap"><span class="gn">Position</span></div>
<div class="gt" style="position:absolute;left:257.4px;top:215.03px;width:207px;height:16px;line-height:16px;white-space:nowrap"><span class="gv num">-46629.0; 40260.9; 8600.0</span></div>
<svg style="position:absolute;left:42.9px;top:218.11px" width="9" height="9" viewBox="0 0 9 9"><rect x=".5" y=".5" width="8" height="8" fill="#fff" stroke="#2a2a2a" stroke-width="1.1"/><g stroke="#111" stroke-width="1.1"><path d="M2 4.500h5"/><path d="M4.500 2v5"/></g></svg>
<div style="position:absolute;left:54.9px;top:245.8px;width:411.6px;height:1.01px;background:#d6d6d6"></div>
<div class="gt" style="position:absolute;left:57.9px;top:231.03px;width:195px;height:16px;line-height:16px;white-space:nowrap"><span class="gn">Rotation</span></div>
<div class="gt" style="position:absolute;left:257.4px;top:231.03px;width:207px;height:16px;line-height:16px;white-space:nowrap"><span class="gv num">90.0</span></div>
<div style="position:absolute;left:54.9px;top:261.8px;width:411.6px;height:1.01px;background:#d6d6d6"></div>
<div class="gt" style="position:absolute;left:57.9px;top:247.03px;width:195px;height:16px;line-height:16px;white-space:nowrap"><span class="gn">Properties</span></div>
<svg style="position:absolute;left:42.9px;top:250.11px" width="9" height="9" viewBox="0 0 9 9"><rect x=".5" y=".5" width="8" height="8" fill="#fff" stroke="#2a2a2a" stroke-width="1.1"/><g stroke="#111" stroke-width="1.1"><path d="M2 4.500h5"/></g></svg>
<div style="position:absolute;left:54.9px;top:277.8px;width:411.6px;height:1.01px;background:#d6d6d6"></div>
<div class="gt" style="position:absolute;left:72.6px;top:263.03px;width:195px;height:16px;line-height:16px;white-space:nowrap"><span class="gn">Height (a):</span></div>
<div class="gt" style="position:absolute;left:257.4px;top:263.03px;width:207px;height:16px;line-height:16px;white-space:nowrap"><span class="gv num">300</span></div>
<div style="position:absolute;left:54.9px;top:293.8px;width:411.6px;height:1.01px;background:#d6d6d6"></div>
<div class="gt" style="position:absolute;left:72.6px;top:279.03px;width:195px;height:16px;line-height:16px;white-space:nowrap"><span class="gn">Width (b):</span></div>
<div class="gt" style="position:absolute;left:257.4px;top:279.03px;width:207px;height:16px;line-height:16px;white-space:nowrap"><span class="gv num">800</span></div>
<div style="position:absolute;left:54.9px;top:309.8px;width:411.6px;height:1.01px;background:#d6d6d6"></div>
<div class="gt" style="position:absolute;left:72.6px;top:295.03px;width:195px;height:16px;line-height:16px;white-space:nowrap"><span class="gn">Length (l):</span></div>
<div class="gt" style="position:absolute;left:257.4px;top:295.03px;width:207px;height:16px;line-height:16px;white-space:nowrap"><span class="gv num">1500</span></div>
<div style="position:absolute;left:54.9px;top:325.8px;width:411.6px;height:1.01px;background:#d6d6d6"></div>
<div class="gt" style="position:absolute;left:72.6px;top:311.03px;width:195px;height:16px;line-height:16px;white-space:nowrap"><span class="gn">Left flange size:</span></div>
<div class="gt" style="position:absolute;left:257.4px;top:311.03px;width:207px;height:16px;line-height:16px;white-space:nowrap"><span class="gv num">20</span></div>
<div style="position:absolute;left:54.9px;top:341.8px;width:411.6px;height:1.01px;background:#d6d6d6"></div>
<div class="gt" style="position:absolute;left:72.6px;top:327.03px;width:195px;height:16px;line-height:16px;white-space:nowrap"><span class="gn">Right flange size:</span></div>
<div class="gt" style="position:absolute;left:257.4px;top:327.03px;width:207px;height:16px;line-height:16px;white-space:nowrap"><span class="gv num">20</span></div>
<div style="position:absolute;left:54.9px;top:357.8px;width:411.6px;height:1.01px;background:#d6d6d6"></div>
<div class="gt" style="position:absolute;left:72.6px;top:343.03px;width:195px;height:16px;line-height:16px;white-space:nowrap"><span class="gn">Loose flange (LR)</span></div>
<div style="position:absolute;left:257.25px;top:345.21px;width:11.1px;height:11.1px;background:#fff;border:1px solid #333"></div>
<div style="position:absolute;left:54.9px;top:373.81px;width:411.6px;height:1.01px;background:#d6d6d6"></div>
<div class="gt" style="position:absolute;left:72.6px;top:359.03px;width:195px;height:16px;line-height:16px;white-space:nowrap"><span class="gn">Material:</span></div>
<div class="gt" style="position:absolute;left:257.4px;top:359.03px;width:207px;height:16px;line-height:16px;white-space:nowrap"><span class="gv">ocynk.</span></div>
<div style="position:absolute;left:54.9px;top:389.81px;width:411.6px;height:1.01px;background:#d6d6d6"></div>
<div class="gt" style="position:absolute;left:72.6px;top:375.04px;width:195px;height:16px;line-height:16px;white-space:nowrap"><span class="gn">Colour:</span></div>
<div class="gt" style="position:absolute;left:257.4px;top:375.04px;width:207px;height:16px;line-height:16px;white-space:nowrap"><span class="gv">RAL 9010</span></div>
<div style="position:absolute;left:54.9px;top:405.81px;width:411.6px;height:1.01px;background:#d6d6d6"></div>
<div class="gt" style="position:absolute;left:57.9px;top:391.04px;width:195px;height:16px;line-height:16px;white-space:nowrap"><span class="gn">Airflow</span></div>
<svg style="position:absolute;left:42.9px;top:394.11px" width="9" height="9" viewBox="0 0 9 9"><rect x=".5" y=".5" width="8" height="8" fill="#fff" stroke="#2a2a2a" stroke-width="1.1"/><g stroke="#111" stroke-width="1.1"><path d="M2 4.500h5"/></g></svg>
<div style="position:absolute;left:54.9px;top:421.81px;width:411.6px;height:1.01px;background:#d6d6d6"></div>
<svg style="position:absolute;left:59.7px;top:410.11px" width="9.5" height="9.5" viewBox="0 0 9.5 9.5"><rect x=".6" y=".6" width="8.3" height="8.3" fill="#fff" stroke="#333" stroke-width="1.1"/><path d="M2.2 4.750h5.100" stroke="#111" stroke-width="1.1"/></svg>
<div class="gt" style="position:absolute;left:70.8px;top:406.06px;width:90px;height:16px;line-height:16px;white-space:nowrap"><span class="gn">b x a:</span></div>
<div class="gt" style="position:absolute;left:300px;top:406.36px;width:96.6px;height:16px;line-height:16px;white-space:nowrap;text-align:right"><span class="gv num">0</span></div>
<div style="position:absolute;left:400.8px;top:407.56px;width:48.6px;height:14.5px;background:#fff;border:1px solid #bdbdbd"></div>
<div class="gt" style="position:absolute;left:403.5px;top:407.71px;width:37.5px;height:16px;line-height:16px;white-space:nowrap"><span class="gv">m3/h</span></div>
<svg style="position:absolute;left:436.95px;top:413.26px" width="7.500" height="5" viewBox="0 0 7.500 5"><path d="M.6 .7l3.100 3.100 3.100-3.100" fill="none" stroke="#444" stroke-width="1"/></svg>
<div style="position:absolute;left:452.1px;top:408.16px;width:12.3px;height:12.9px;background:#fff;border:1px solid #b4b4b4"></div>
<div style="position:absolute;left:54.9px;top:437.81px;width:411.6px;height:1.01px;background:#d6d6d6"></div>
<div style="position:absolute;left:254.55px;top:422.81px;width:141.9px;height:15px;background:#ececec"></div>
<div class="gt" style="position:absolute;left:300px;top:422.36px;width:96.6px;height:16px;line-height:16px;white-space:nowrap;text-align:right"><span class="gv num">0.00</span></div>
<div style="position:absolute;left:400.8px;top:423.56px;width:48.6px;height:14.5px;background:#fff;border:1px solid #bdbdbd"></div>
<div class="gt" style="position:absolute;left:403.5px;top:423.71px;width:37.5px;height:16px;line-height:16px;white-space:nowrap"><span class="gv">m/s</span></div>
<svg style="position:absolute;left:436.95px;top:429.26px" width="7.500" height="5" viewBox="0 0 7.500 5"><path d="M.6 .7l3.100 3.100 3.100-3.100" fill="none" stroke="#444" stroke-width="1"/></svg>
<div style="position:absolute;left:54.9px;top:453.81px;width:411.6px;height:1.01px;background:#d6d6d6"></div>
<div class="gt" style="position:absolute;left:86.1px;top:438.96px;width:90px;height:16px;line-height:16px;white-space:nowrap"><span class="gn">zeta =</span></div>
<div class="gt" style="position:absolute;left:300px;top:438.36px;width:96.6px;height:16px;line-height:16px;white-space:nowrap;text-align:right"><span class="gv num">0.00</span></div>
<div style="position:absolute;left:54.9px;top:469.81px;width:411.6px;height:1.01px;background:#d6d6d6"></div>
<div class="gt" style="position:absolute;left:86.1px;top:454.96px;width:90px;height:16px;line-height:16px;white-space:nowrap"><span class="gn">P =</span></div>
<div class="gt" style="position:absolute;left:300px;top:454.36px;width:96.6px;height:16px;line-height:16px;white-space:nowrap;text-align:right"><span class="gv num">0.00</span></div>
<div style="position:absolute;left:400.8px;top:455.56px;width:48.6px;height:14.5px;background:#fff;border:1px solid #bdbdbd"></div>
<div class="gt" style="position:absolute;left:403.5px;top:455.71px;width:37.5px;height:16px;line-height:16px;white-space:nowrap"><span class="gv">Pa</span></div>
<svg style="position:absolute;left:436.95px;top:461.26px" width="7.500" height="5" viewBox="0 0 7.500 5"><path d="M.6 .7l3.100 3.100 3.100-3.100" fill="none" stroke="#444" stroke-width="1"/></svg>
<div style="position:absolute;left:54.9px;top:485.81px;width:411.6px;height:1.01px;background:#d6d6d6"></div>
<svg style="position:absolute;left:59.7px;top:474.11px" width="9.5" height="9.5" viewBox="0 0 9.5 9.5"><rect x=".6" y=".6" width="8.3" height="8.3" fill="#fff" stroke="#333" stroke-width="1.1"/><path d="M2.2 4.750h5.100" stroke="#111" stroke-width="1.1"/></svg>
<div class="gt" style="position:absolute;left:70.8px;top:470.06px;width:90px;height:16px;line-height:16px;white-space:nowrap"><span class="gn">b x a:</span></div>
<div class="gt" style="position:absolute;left:300px;top:470.36px;width:96.6px;height:16px;line-height:16px;white-space:nowrap;text-align:right"><span class="gv num">0</span></div>
<div style="position:absolute;left:400.8px;top:471.56px;width:48.6px;height:14.5px;background:#fff;border:1px solid #bdbdbd"></div>
<div class="gt" style="position:absolute;left:403.5px;top:471.71px;width:37.5px;height:16px;line-height:16px;white-space:nowrap"><span class="gv">m3/h</span></div>
<svg style="position:absolute;left:436.95px;top:477.26px" width="7.500" height="5" viewBox="0 0 7.500 5"><path d="M.6 .7l3.100 3.100 3.100-3.100" fill="none" stroke="#444" stroke-width="1"/></svg>
<div style="position:absolute;left:452.1px;top:472.16px;width:12.3px;height:12.9px;background:#f4f4f4;border:1px solid #b4b4b4;font-size:9.500px;font-weight:bold;color:#111;line-height:10.90px;text-align:center;letter-spacing:-1px">&gt;I</div>
<div style="position:absolute;left:54.9px;top:501.81px;width:411.6px;height:1.01px;background:#d6d6d6"></div>
<div style="position:absolute;left:254.55px;top:486.81px;width:141.9px;height:15px;background:#ececec"></div>
<div class="gt" style="position:absolute;left:300px;top:486.36px;width:96.6px;height:16px;line-height:16px;white-space:nowrap;text-align:right"><span class="gv num">0.00</span></div>
<div style="position:absolute;left:400.8px;top:487.56px;width:48.6px;height:14.5px;background:#fff;border:1px solid #bdbdbd"></div>
<div class="gt" style="position:absolute;left:403.5px;top:487.71px;width:37.5px;height:16px;line-height:16px;white-space:nowrap"><span class="gv">m/s</span></div>
<svg style="position:absolute;left:436.95px;top:493.26px" width="7.500" height="5" viewBox="0 0 7.500 5"><path d="M.6 .7l3.100 3.100 3.100-3.100" fill="none" stroke="#444" stroke-width="1"/></svg>
<div style="position:absolute;left:54.9px;top:517.81px;width:411.6px;height:1.01px;background:#d6d6d6"></div>
<div style="position:absolute;left:254.55px;top:502.81px;width:141.9px;height:15px;background:#ececec"></div>
<div class="gt" style="position:absolute;left:86.1px;top:502.96px;width:90px;height:16px;line-height:16px;white-space:nowrap"><span class="gn">zeta =</span></div>
<div style="position:absolute;left:54.9px;top:533.81px;width:411.6px;height:1.01px;background:#d6d6d6"></div>
<div style="position:absolute;left:254.55px;top:518.82px;width:141.9px;height:15px;background:#ececec"></div>
<div class="gt" style="position:absolute;left:86.1px;top:518.97px;width:90px;height:16px;line-height:16px;white-space:nowrap"><span class="gn">P =</span></div>
<div style="position:absolute;left:400.8px;top:519.57px;width:48.6px;height:14.5px;background:#cfcfcf;border:1px solid #c4c4c4"></div>
<svg style="position:absolute;left:436.95px;top:525.26px" width="7.500" height="5" viewBox="0 0 7.500 5"><path d="M.6 .7l3.100 3.100 3.100-3.100" fill="none" stroke="#aaa" stroke-width="1"/></svg>
<div style="position:absolute;left:466.5px;top:0.1px;width:18.6px;height:573px;background:#323336"></div>
<div style="position:absolute;left:466.5px;top:0.1px;width:18.6px;height:19.5px;background:#1f2023"></div>
</div>

<!-- VIEWPORT -->
<div style="position:absolute;left:485.1px;top:155.1px;width:1050.9px;height:21.45px;background:#1f2023"></div>
<div style="position:absolute;left:483.9px;top:155.1px;width:1.35px;height:573px;background:#47484b"></div>
<div style="position:absolute;left:485.1px;top:173.1px;width:1044.9px;height:3.6px;background:#2e2f32"></div>
<div style="position:absolute;left:565.2px;top:156.45px;width:21.9px;height:16.5px;background:#3a3b3e"></div>
<div id="doctab" style="position:absolute;left:486.45px;top:156px;width:54.3px;height:17.25px;overflow:hidden"><span style="position:absolute;right:0;top:0;line-height:17.25px;font-size:11px;letter-spacing:-.4px;color:#e4e4e4;white-space:nowrap">heating and cooling installation v5.dwg*</span></div>
<svg style="position:absolute;left:540px;top:156px;overflow:visible" width="51" height="18" viewBox="0 0 34 12" ><path d="M3.800 2.400l6.200 6.200m0-6.200l-6.200 6.200" stroke="#d8d8d8" stroke-width="1"/><path d="M24.200 1.800v7.400M20.500 5.500h7.400" stroke="#e8e8e8" stroke-width="1.300"/></svg>
<div style="position:absolute;left:1530px;top:155.1px;width:6px;height:559.5px;background:#2e2f32"></div>
<div style="position:absolute;left:485.1px;top:715.5px;width:1044.9px;height:11.25px;background:#323336"></div>
<svg id="vp" style="position:absolute;left:487.2px;top:176.7px;background:#000" width="1042.8" height="538.8" viewBox="324.800 117.800 695.200 359.200"><polyline points="379.2,204.4 410.4,188.8 414.5,187.2 456.6,210 456.6,238" fill="none" stroke="#00c400" stroke-width="1.8" stroke-linejoin="round" /><polyline points="380,205.6 411,190 414.5,188.8 455,210.5" fill="none" stroke="#22e022" stroke-width="0.5" stroke-linejoin="round" /><polyline points="342.2,190.4 345,193.5 349.6,192.9 382.5,175.7 450,212.5" fill="none" stroke="#e67a0c" stroke-width="2" stroke-linejoin="round" /><polyline points="382.5,175.7 382.5,166.5 385,165 392,168 392.3,170.5 383.5,176" fill="none" stroke="#e67a0c" stroke-width="1.5" stroke-linejoin="round" /><polyline points="383.6,176 383.8,186" fill="none" stroke="#d8601a" stroke-width="1.5" stroke-linejoin="round" /><rect x="382.600" y="186" width="2.600" height="2.400" fill="#e67a0c"/><polyline points="416.9,226 415,203 415.5,201 433.3,191.3 433.3,205" fill="none" stroke="#e67a0c" stroke-width="1.6" stroke-linejoin="round" /><polyline points="415.2,212 417,226.6" fill="none" stroke="#e0581e" stroke-width="1.5" stroke-linejoin="round" /><polyline points="433.3,205 433.5,216" fill="none" stroke="#e0501e" stroke-width="1.5" stroke-linejoin="round" /><rect x="415.900" y="225.500" width="2.400" height="2.400" fill="#e67a0c"/><rect x="432.400" y="215.400" width="2.400" height="2.400" fill="#e67a0c"/><polygon points="373.4,203.5 376,201.8 379.2,203 379,205.2 375.5,205.6" fill="#e85a10" /><polyline points="420.5,233.5 452,215.5" fill="none" stroke="#e67a0c" stroke-width="4" stroke-linejoin="round" /><polyline points="420,232 451.5,214" fill="none" stroke="#f59a3a" stroke-width="0.8" stroke-linejoin="round" /><polyline points="448,212.8 452,214.6 498.5,240.3 502.5,243.5 503.5,247" fill="none" stroke="#e67a0c" stroke-width="3.2" stroke-linejoin="round" /><polyline points="452,213.5 499,239.3" fill="none" stroke="#f59a3a" stroke-width="0.7" stroke-linejoin="round" /><polyline points="456.6,217 456.6,236" fill="none" stroke="#d0501a" stroke-width="1.8" stroke-linejoin="round" /><polyline points="503.5,246 503.5,262 499,266" fill="none" stroke="#e67a0c" stroke-width="2.8" stroke-linejoin="round" /><polyline points="505,262 510,259 510,250 514,247.5 518,250 520.5,252 520.5,268" fill="none" stroke="#e67a0c" stroke-width="2.2" stroke-linejoin="round" /><polyline points="520.5,262 520.5,270" fill="none" stroke="#e0502a" stroke-width="1.2" stroke-linejoin="round" /><polyline points="499,266 470,283" fill="none" stroke="#e67a0c" stroke-width="2" stroke-linejoin="round" /><polyline points="481,277.8 464.5,287.5 461.8,291 461.8,303 464,307 471,310.5" fill="none" stroke="#e67a0c" stroke-width="2" stroke-linejoin="round" /><polygon points="470.5,307.5 475,305 480.5,307.5 481,313 476,316 471,313.5" fill="#e67a0c" /><polyline points="462,309 470,311" fill="none" stroke="#0000ff" stroke-width="0.6" stroke-linejoin="round" /><polyline points="482,311 488,309" fill="none" stroke="#0000ff" stroke-width="0.6" stroke-linejoin="round" /><polyline points="475,317 475,321" fill="none" stroke="#0000ff" stroke-width="0.6" stroke-linejoin="round" /><polyline points="325,241.4 366,263.6" fill="none" stroke="#00c400" stroke-width="2.4" stroke-linejoin="round" /><polyline points="325,240.6 366,262.8" fill="none" stroke="#22e022" stroke-width="0.5" stroke-linejoin="round" /><polyline points="325,237 331,235" fill="none" stroke="#00c400" stroke-width="1.6" stroke-linejoin="round" /><polyline points="325,257 347.2,270.1 374.2,256.2" fill="none" stroke="#00c400" stroke-width="1" stroke-linejoin="round" /><polyline points="347.2,270.1 361.1,279.2" fill="none" stroke="#00c400" stroke-width="1" stroke-linejoin="round" /><polyline points="325,251 345,262" fill="none" stroke="#00c400" stroke-width="1" stroke-linejoin="round" /><polyline points="376.7,259.5 354.5,271.8 364.4,277.5" fill="none" stroke="#86a89a" stroke-width="1" stroke-linejoin="round" /><polyline points="389.8,259.5 365.2,274.2 368,276" fill="none" stroke="#9a00ff" stroke-width="1.1" stroke-linejoin="round" /><polyline points="395.6,277.5 417,294 418.6,297 418.6,307" fill="none" stroke="#00c400" stroke-width="2.2" stroke-linejoin="round" /><polygon points="325,211 328.3,212.5 328.3,227.4 325,226" fill="#c80000" /><polygon points="325,178.1 342.2,189.6 347.2,194.5 360.3,197.3 421.8,233.1 421.8,256.2 415.3,260.3 403.8,258.6 390.7,252.1 372.6,242.7 361.1,237.3 361.1,247.2 355.4,246.3 328.3,236.5 328.3,212.5 325,211" fill="#00a400" /><polygon points="328.3,227.4 325,226 325,236 328.3,236.5" fill="#00a400" /><polygon points="325,178.1 342.2,189.6 347.2,194.5 360.3,197.3 421.8,233.1 421.8,246 394,231 360.3,212.6 347,207.5 335,201 325,195.5" fill="#00c400" /><polygon points="328.3,214 345,222 345,242.5 328.3,236.5" fill="#008a00" /><polygon points="325,195.5 335,201 335,216.5 328.3,213.5 325,211" fill="#00b400" /><polyline points="335,184.8 335,216" fill="none" stroke="#008a00" stroke-width="0.7" stroke-linejoin="round" /><polyline points="347.2,194.5 347.2,223" fill="none" stroke="#008a00" stroke-width="0.7" stroke-linejoin="round" /><polyline points="355.5,196.3 355.5,246" fill="none" stroke="#008a00" stroke-width="0.7" stroke-linejoin="round" /><polyline points="372.6,204.5 372.6,242.7" fill="none" stroke="#008a00" stroke-width="0.7" stroke-linejoin="round" /><polyline points="394,217 394,254" fill="none" stroke="#008a00" stroke-width="0.7" stroke-linejoin="round" /><polyline points="408,225 408,259" fill="none" stroke="#008a00" stroke-width="0.7" stroke-linejoin="round" /><polyline points="325,195.5 335,201 347,207.5 360.3,212.6 394,231 421.8,246" fill="none" stroke="#22e022" stroke-width="0.7" stroke-linejoin="round" /><polyline points="325.5,178.8 342.2,190.2 347.2,195 360.3,197.9 421.8,233.7" fill="none" stroke="#22e022" stroke-width="0.5" stroke-linejoin="round" opacity=".7"/><ellipse cx="393.100" cy="228.200" rx="3.600" ry="2.600" fill="none" stroke="#78f078" stroke-width=".6"/><ellipse cx="385" cy="224.600" rx="2" ry="1.600" fill="none" stroke="#78f078" stroke-width=".6"/><polygon points="372.6,232.3 386.6,239.5 386.6,249.5 372.6,242.7" fill="#008a00" /><ellipse cx="376.500" cy="237.600" rx="1.800" ry="1.600" fill="none" stroke="#50d050" stroke-width=".6"/><ellipse cx="382" cy="241" rx="1.800" ry="1.600" fill="none" stroke="#50d050" stroke-width=".6"/><polyline points="398.5,218 399.5,215.5 401,218.5" fill="none" stroke="#00c400" stroke-width="1" stroke-linejoin="round" /><rect x="399" y="217" width="1.600" height="2" fill="#e67a0c"/><path d="M404.600 224.500q3-4 7.500-1.500 2.400 2 2.400 5.200" fill="none" stroke="#ff00ff" stroke-width="1.100"/><polygon points="361.1,237.3 372.6,242.7 390.7,252.1 403.8,258.6 415.3,260.3 415.3,268.5 410.4,271.8 398.9,274.2 395.6,277.5 380.8,286.6 372,290 364,276.5 379.2,264.4 374.2,260.3 374.2,256.2 361.1,249.6" fill="#e67a0c" /><polygon points="361.1,237.3 372.6,242.7 372.6,255.5 361.1,249.6" fill="#f08a20" /><polygon points="374.5,244 385,249.3 385,262 374.5,256.5" fill="#cf6a06" /><polygon points="386.5,250 403.8,258.6 415.3,260.3 415.3,268.5 410.4,271.8 400,268 386.5,261.5" fill="#cf6a06" /><polyline points="374.2,243.5 374.2,256.2" fill="none" stroke="#b25804" stroke-width="0.7" stroke-linejoin="round" /><polyline points="385.5,249.5 385.5,262" fill="none" stroke="#b25804" stroke-width="0.7" stroke-linejoin="round" /><polyline points="400,257 400,268" fill="none" stroke="#b25804" stroke-width="0.7" stroke-linejoin="round" /><polyline points="374.2,260.3 377,264 380.5,264.5" fill="none" stroke="#e67a0c" stroke-width="2" stroke-linejoin="round" /><polyline points="395.6,277.5 410.4,280 414.5,284.1 413.6,288.2 403.8,293.1" fill="none" stroke="#e67a0c" stroke-width="2.6" stroke-linejoin="round" /><polyline points="396,276.8 410.4,279.2 414.8,283.5" fill="none" stroke="#f59a3a" stroke-width="0.6" stroke-linejoin="round" /><polygon points="426.8,262 434.2,266 434.2,306.5 430.5,308.5 426.8,304" fill="#00a400" /><polyline points="428.6,266 428.6,305" fill="none" stroke="#22e022" stroke-width="0.6" stroke-linejoin="round" /><polygon points="421.8,240 431,235 438.3,239 438.3,263.5 431.5,267.7 421.8,263" fill="#00a400" /><polygon points="421.8,240 431,235 438.3,239 429.5,243.8" fill="#00c400" /><polygon points="429.5,243.8 438.3,239 438.3,263.5 431.5,267.7 429.5,266.5" fill="#008a00" /><circle cx="426.300" cy="241.200" r="2.200" fill="#008a00"/><polyline points="430.3,298.5 512,340.5" fill="none" stroke="#00c400" stroke-width="2.6" stroke-linejoin="round" /><polyline points="431,297.5 512,339.5" fill="none" stroke="#22e022" stroke-width="0.6" stroke-linejoin="round" /><polyline points="393.4,283.3 416,294.5 418,297 418,307" fill="none" stroke="#00c400" stroke-width="2" stroke-linejoin="round" /><polyline points="500,342.5 587,296" fill="none" stroke="#00c400" stroke-width="2.6" stroke-linejoin="round" /><polyline points="500,341.5 587,295" fill="none" stroke="#22e022" stroke-width="0.6" stroke-linejoin="round" /><polyline points="505,345 588,301 588,314" fill="none" stroke="#00c400" stroke-width="1.6" stroke-linejoin="round" /><polyline points="536,330 536,340" fill="none" stroke="#00c400" stroke-width="1.6" stroke-linejoin="round" /><polyline points="587.5,304 587.5,316" fill="none" stroke="#00c400" stroke-width="2.2" stroke-linejoin="round" /><polyline points="567.7,308.1 591.6,293.7 588.7,291 595.4,287 595.4,275.5" fill="none" stroke="#00c400" stroke-width="1" stroke-linejoin="round" /><polyline points="599.3,276.5 609.8,271.7" fill="none" stroke="#00c400" stroke-width="1.8" stroke-linejoin="round" /><polyline points="584,271.7 595.4,270.8" fill="none" stroke="#00c400" stroke-width="1" stroke-linejoin="round" /><polyline points="573.4,269.8 582,275.5 584.5,274.6 584.5,259.3 586.8,257.4 594.5,261.2 599.3,267 599.3,293.7 569.6,309" fill="none" stroke="#5f8f72" stroke-width="1.6" stroke-linejoin="round" /><polyline points="500.4,357 506.4,361.7 585,322 585,335" fill="none" stroke="#9a00ff" stroke-width="1.1" stroke-linejoin="round" /><polyline points="505.9,359.5 510.2,362.8 597,319 597,335" fill="none" stroke="#ff00ff" stroke-width="1" stroke-linejoin="round" /><polygon points="434.4,233.8 596,318.317 596,335.817 432.5,247.306" fill="#00a400" /><polygon points="434.4,233.8 440,231.8 452,238 596,318.317 596,328.817 437,243.16" fill="#00c400" /><polyline points="437,243.46 596,329.117" fill="none" stroke="#22e022" stroke-width="0.7" stroke-linejoin="round" /><polyline points="452.9,243.976 452.9,259.976" fill="none" stroke="#008a00" stroke-width="0.7" stroke-linejoin="round" /><polyline points="479.93,258.112 479.93,274.112" fill="none" stroke="#008a00" stroke-width="0.7" stroke-linejoin="round" /><polyline points="506.96,272.249 506.96,288.249" fill="none" stroke="#008a00" stroke-width="0.7" stroke-linejoin="round" /><polyline points="532.4,285.554 532.4,301.554" fill="none" stroke="#008a00" stroke-width="0.7" stroke-linejoin="round" /><polyline points="557.84,298.859 557.84,314.859" fill="none" stroke="#008a00" stroke-width="0.7" stroke-linejoin="round" /><polyline points="580.1,310.501 580.1,326.501" fill="none" stroke="#008a00" stroke-width="0.7" stroke-linejoin="round" /><polygon points="593,321.5 599.5,318 605.5,321.5 605.5,329 599,332.5 593,329.5" fill="#00c400" /><polygon points="599,325 605.5,321.5 605.5,329 599,332.5" fill="#008a00" /><polyline points="608,328 613,327.5" fill="none" stroke="#0000ff" stroke-width="0.6" stroke-linejoin="round" /><polyline points="590,335 597,332.5" fill="none" stroke="#00c400" stroke-width="0.7" stroke-linejoin="round" /><polyline points="592,333 594,336" fill="none" stroke="#0000ff" stroke-width="0.5" stroke-linejoin="round" /><polygon points="517,290.5 526.4,284.6 551,298.4 551.6,302.8 541.7,309 518,296.5" fill="#3c9a7c" stroke="#70c8aa" stroke-width="1.200" stroke-linejoin="round"/><rect x="520.9" y="289.1" width="3.200" height="2.800" fill="#0020ff" transform="skewX(-20)" transform-origin="522.5 290.5"/><rect x="532.4" y="295.6" width="3.200" height="2.800" fill="#0020ff" transform="skewX(-20)" transform-origin="534 297"/><rect x="543.4" y="302.1" width="3.200" height="2.800" fill="#0020ff" transform="skewX(-20)" transform-origin="545 303.5"/><polygon points="440,233 452,238.5 445,244 437,240" fill="#00c400" /><polygon points="359.5,284.1 361,279 364.4,275.9 379.2,264.4 390.7,259.5 398,263 398.9,274.2 395.6,277.5 380.8,286.6 376,292 366,298.9 360.3,293.9" fill="#e67a0c" /><polyline points="364.4,276.5 379.2,265 390.7,260.1" fill="none" stroke="#f59a3a" stroke-width="0.6" stroke-linejoin="round" /><polygon points="364.4,276.5 381,289.1 515.2,363.407 515.2,378.495 372,294.99 362,285" fill="#e67a0c" /><polygon points="359.5,284.1 362,284.5 372,294.99 514,376.877 514,382.495 510,381.15 366,298.9 360.3,293.9" fill="#cf6a06" /><polygon points="359.5,284.1 362,281 366,285.5 372,290.5 372,301.5 366,298.9 360.3,293.9" fill="#e67a0c" /><polyline points="372,294.69 514,376.577" fill="none" stroke="#f59a3a" stroke-width="0.6" stroke-linejoin="round" opacity=".8"/><polyline points="380.508,299.638 380.508,305.438" fill="none" stroke="#b25804" stroke-width="0.8" stroke-linejoin="round" /><polyline points="380.508,299.638 383.508,297.438" fill="none" stroke="#b25804" stroke-width="0.5" stroke-linejoin="round" /><polyline points="400.36,311.184 400.36,316.984" fill="none" stroke="#b25804" stroke-width="0.8" stroke-linejoin="round" /><polyline points="400.36,311.184 403.36,308.984" fill="none" stroke="#b25804" stroke-width="0.5" stroke-linejoin="round" /><polyline points="420.212,322.73 420.212,328.53" fill="none" stroke="#b25804" stroke-width="0.8" stroke-linejoin="round" /><polyline points="420.212,322.73 423.212,320.53" fill="none" stroke="#b25804" stroke-width="0.5" stroke-linejoin="round" /><polyline points="440.064,334.276 440.064,340.076" fill="none" stroke="#b25804" stroke-width="0.8" stroke-linejoin="round" /><polyline points="440.064,334.276 443.064,332.076" fill="none" stroke="#b25804" stroke-width="0.5" stroke-linejoin="round" /><polyline points="459.916,345.822 459.916,351.622" fill="none" stroke="#b25804" stroke-width="0.8" stroke-linejoin="round" /><polyline points="459.916,345.822 462.916,343.622" fill="none" stroke="#b25804" stroke-width="0.5" stroke-linejoin="round" /><polyline points="479.768,357.367 479.768,363.167" fill="none" stroke="#b25804" stroke-width="0.8" stroke-linejoin="round" /><polyline points="479.768,357.367 482.768,355.167" fill="none" stroke="#b25804" stroke-width="0.5" stroke-linejoin="round" /><polyline points="499.62,368.913 499.62,374.713" fill="none" stroke="#b25804" stroke-width="0.8" stroke-linejoin="round" /><polyline points="499.62,368.913 502.62,366.713" fill="none" stroke="#b25804" stroke-width="0.5" stroke-linejoin="round" /><polygon points="513,382.5 515.4,378.2 515.4,349.7 521.2,352.4 521.2,381.4 517.4,383.6" fill="#ee8418" /><polygon points="521.2,352.4 531,357.4 531,372.1 521.2,381.4" fill="#cf6a06" /><polygon points="521.2,381.4 531,372.1 531,373 517.4,383.6" fill="#b25804" /><polygon points="515.4,349.7 528.5,340.7 533.8,341.8 555.7,354.3 555.7,356.8 543.1,362.8 531,357.4 521.2,352.4" fill="#e67a0c" /><polygon points="531,357.4 541.4,361.7 541.4,365 531,360.1" fill="#b25804" /><polygon points="541.4,361.7 555.7,354.8 555.7,357.5 543.6,366.7 541.4,365" fill="#cf6a06" /><polygon points="549.6,349.6 552,348.5 554.6,349.7 556.8,353 556.2,356.6 555.7,354.3" fill="#00c400" /><polyline points="558.5,357.5 563,357.3" fill="none" stroke="#0000ff" stroke-width="0.6" stroke-linejoin="round" /><polyline points="550.5,362 551,364" fill="none" stroke="#0000ff" stroke-width="0.6" stroke-linejoin="round" /><polyline points="385.7,283.3 400,291.2 500,345.2 505.3,350.5 505.9,359.5" fill="none" stroke="#ff00ff" stroke-width="1.1" stroke-linejoin="round" /><polyline points="384,285.2 400,293.9 496,346.8 499.8,351.9 500.4,357" fill="none" stroke="#9a00ff" stroke-width="1.1" stroke-linejoin="round" /><polyline points="380.8,287.6 400,298 497,350.4" fill="none" stroke="#86a89a" stroke-width="0.9" stroke-linejoin="round" /><polyline points="585.4,331 585.4,387.5 589,389 602,382" fill="none" stroke="#ff00ff" stroke-width="1.1" stroke-linejoin="round" /><polyline points="597.1,331 597.1,378" fill="none" stroke="#9a00ff" stroke-width="1" stroke-linejoin="round" /><polygon points="532.8,253.4 545.1,258.8 545.1,287.6 532.8,280.7" fill="#cf6a06" /><polygon points="545.1,258.8 576.6,241 576.6,271.1 545.1,287.6" fill="#e67a0c" /><polygon points="532.8,253.4 564.8,235.6 576.6,241 545.1,258.8" fill="#f08418" /><polyline points="546.3,287 546.3,269" fill="none" stroke="#40e020" stroke-width="0.8" stroke-linejoin="round" /><polyline points="548.2,286.004 548.2,271.004" fill="none" stroke="#40e020" stroke-width="0.8" stroke-linejoin="round" /><polyline points="550.1,285.009 550.1,270.009" fill="none" stroke="#40e020" stroke-width="0.8" stroke-linejoin="round" /><polyline points="552,284.013 552,266.013" fill="none" stroke="#40e020" stroke-width="0.8" stroke-linejoin="round" /><polyline points="553.9,283.018 553.9,268.018" fill="none" stroke="#40e020" stroke-width="0.8" stroke-linejoin="round" /><polyline points="555.8,282.022 555.8,267.022" fill="none" stroke="#40e020" stroke-width="0.8" stroke-linejoin="round" /><polyline points="557.7,281.026 557.7,263.026" fill="none" stroke="#40e020" stroke-width="0.8" stroke-linejoin="round" /><polyline points="559.6,280.031 559.6,265.031" fill="none" stroke="#40e020" stroke-width="0.8" stroke-linejoin="round" /><polyline points="561.5,279.035 561.5,264.035" fill="none" stroke="#40e020" stroke-width="0.8" stroke-linejoin="round" /><polyline points="563.4,278.04 563.4,260.04" fill="none" stroke="#40e020" stroke-width="0.8" stroke-linejoin="round" /><polyline points="565.3,277.044 565.3,262.044" fill="none" stroke="#40e020" stroke-width="0.8" stroke-linejoin="round" /><polyline points="567.2,276.048 567.2,261.048" fill="none" stroke="#40e020" stroke-width="0.8" stroke-linejoin="round" /><polyline points="569.1,275.053 569.1,257.053" fill="none" stroke="#40e020" stroke-width="0.8" stroke-linejoin="round" /><polyline points="571,274.057 571,259.057" fill="none" stroke="#40e020" stroke-width="0.8" stroke-linejoin="round" /><polyline points="572.9,273.062 572.9,258.062" fill="none" stroke="#40e020" stroke-width="0.8" stroke-linejoin="round" /><polyline points="574.8,272.066 574.8,254.066" fill="none" stroke="#40e020" stroke-width="0.8" stroke-linejoin="round" /><polyline points="534,281.5 534,268.5" fill="none" stroke="#40e020" stroke-width="0.8" stroke-linejoin="round" /><polyline points="536.4,282.8 536.4,269.8" fill="none" stroke="#40e020" stroke-width="0.8" stroke-linejoin="round" /><polyline points="538.8,284.1 538.8,271.1" fill="none" stroke="#40e020" stroke-width="0.8" stroke-linejoin="round" /><polyline points="541.2,285.4 541.2,272.4" fill="none" stroke="#40e020" stroke-width="0.8" stroke-linejoin="round" /><polyline points="543.6,286.7 543.6,273.7" fill="none" stroke="#40e020" stroke-width="0.8" stroke-linejoin="round" /><ellipse cx="559.500" cy="258" rx="3.600" ry="4" fill="none" stroke="#40e020" stroke-width=".6"/><circle cx="538.500" cy="264" r="1.600" fill="none" stroke="#40e020" stroke-width=".6"/><polyline points="552,248 555,246.5 556,248.5" fill="none" stroke="#40e020" stroke-width="0.6" stroke-linejoin="round" /><polygon points="607.5,258.5 614,253.5 621.3,257 621.3,270.5 614.5,274.6 607.5,271.5" fill="#e67a0c" /><polygon points="607.5,258.5 613.5,261.5 613.5,274 607.5,271.5" fill="#cf6a06" /><polygon points="587.8,256 591,254 594.5,256 594.5,260 591,261.5 587.8,259.5" fill="#e67a0c" /><rect x="581" y="265.500" width="3" height="3" fill="#e67a0c"/><rect x="597.800" y="271.500" width="3" height="3.500" fill="#e67a0c"/><rect x="574" y="268" width="3.500" height="2.500" fill="#e67a0c"/><polyline points="607,262 600,266 594,269" fill="none" stroke="#e67a0c" stroke-width="1.2" stroke-linejoin="round" /><polyline points="620,265 624,268" fill="none" stroke="#e67a0c" stroke-width="1.5" stroke-linejoin="round" /><rect x="609.500" y="228" width="2.600" height="4" fill="#e67a0c"/><polyline points="610.8,231 610.8,263 607,261" fill="none" stroke="#00e5e5" stroke-width="1.5" stroke-linejoin="round" /><polyline points="610.8,230 614.5,230.5 667,258.8 660.5,264.5" fill="none" stroke="#00e5e5" stroke-width="1.6" stroke-linejoin="round" /><polyline points="590.3,308 661.4,266.5 725.4,304.4 684.9,330.7 746.3,368.6 731.4,379.8 832.4,439.7 776.3,475.3 772,478" fill="none" stroke="#00e5e5" stroke-width="2.2" stroke-linejoin="round" /><polyline points="640,280.3 660.8,267.2" fill="none" stroke="#00e5e5" stroke-width="1.5" stroke-linejoin="round" /><polyline points="680.5,273.8 735.2,305.5 692.5,331.8 755,369.5 739.5,381 841,441 786,477" fill="none" stroke="#00e5e5" stroke-width="1.3" stroke-linejoin="round" /><polyline points="644.8,245.3 672.4,260.6 664,265.5 739.6,305.5 697,331.8 760,370 744.5,381.5 846,443 793,477" fill="none" stroke="#0000ff" stroke-width="1.2" stroke-linejoin="round" /><polyline points="644.8,245.3 644.8,271.6 640,274 636.8,275.2 620.4,267" fill="none" stroke="#0000ff" stroke-width="1" stroke-linejoin="round" /><polyline points="648,247 676,262.5 668,267.5" fill="none" stroke="#0000ff" stroke-width="0.8" stroke-linejoin="round" /><polyline points="686,272.7 744,305.5 700.2,331.8 764.5,370.5 749,382.5 850.5,445 800,477.5" fill="none" stroke="#ff0000" stroke-width="1.3" stroke-linejoin="round" /><polyline points="688.2,270.5 748.3,305.5 704.6,331.8 768.8,370.5 753.5,383.6 854.9,447.2 807,477.5" fill="none" stroke="#ff8a8a" stroke-width="1.1" stroke-linejoin="round" /><polyline points="686.4,272.7 686.4,329.6" fill="none" stroke="#ff0000" stroke-width="1.3" stroke-linejoin="round" /><polyline points="688.6,271.5 688.6,331" fill="none" stroke="#ff8a8a" stroke-width="1" stroke-linejoin="round" /><polyline points="567.9,398.4 567.9,340 570,337.5 577.5,334.4 613.8,354.2 668.5,323 684.9,331.8" fill="none" stroke="#ff0000" stroke-width="1.3" stroke-linejoin="round" /><polyline points="578.8,395 578.8,336 614,355.8 668.5,324.8 683,332.8" fill="none" stroke="#ff8a8a" stroke-width="1.1" stroke-linejoin="round" /><polyline points="563,402.5 587.5,390.2 587.5,387 590,386 590,389.5 602.6,383" fill="none" stroke="#ff0000" stroke-width="1.5" stroke-linejoin="round" /><polyline points="568.4,409.3 590.3,397 590.3,393 602.6,387" fill="none" stroke="#ff8a8a" stroke-width="1.3" stroke-linejoin="round" /><polyline points="542.4,416.2 556,409.3" fill="none" stroke="#ffff00" stroke-width="1.2" stroke-linejoin="round" /><polyline points="587.5,380.5 597,376.5" fill="none" stroke="#0000ff" stroke-width="1" stroke-linejoin="round" /><rect x="566.5" y="378" width="3" height="7" fill="#e67a0c"/><rect x="577.5" y="378" width="2.4" height="5" fill="#e67a0c"/><rect x="584" y="366" width="3.4" height="6" fill="#e67a0c"/><rect x="596" y="369" width="2.4" height="5" fill="#e67a0c"/><rect x="556.5" y="403" width="3.2" height="12" fill="#e67a0c"/><rect x="568" y="408" width="5" height="4.5" fill="#e67a0c"/><rect x="548" y="416" width="3" height="5" fill="#e67a0c"/><polygon points="602.6,376 607,372 612.2,374.5 612.2,390 608,393 602.6,390.5" fill="#e67a0c" /><polygon points="602.6,376 606,377.5 606,392 602.6,390.5" fill="#cf6a06" /><polygon points="528.7,420.5 538,425.5 538,440.5 528.7,435.5" fill="#cf6a06" /><polygon points="538,425.5 546.5,421 546.5,435.5 538,440.5" fill="#e67a0c" /><polygon points="528.7,420.5 537.5,415.5 546.5,421 538,425.5" fill="#f08418" /><polyline points="531.5,441 531.5,446.5 540,448 548,443 541,440 540,448" fill="none" stroke="#ffff00" stroke-width="1" stroke-linejoin="round" /><polygon points="625.4,402.2 640.2,394 655,402.2 640.2,410.4" fill="#cf6a06" /><polygon points="625.4,402.2 640.2,410.4 655,402.2 655,403.1 640.2,411.4 625.4,403.1" fill="#b25804" /><polygon points="629,397 640.2,403.2 640.2,407.6 629,401.4" fill="#d8700a" /><polygon points="651.4,397 640.2,403.2 640.2,407.6 651.4,401.4" fill="#cf6a06" /><polygon points="629,397 640.2,390.8 651.4,397 640.2,403.2" fill="#ea800e" stroke="#ea800e" stroke-width="1" stroke-linejoin="round"/><path d="M642.2 394l3.5 -.8 -.6 3.200 -2.400 .6z" fill="#20e020"/><path d="M634.7 398l1.500 -1.600 1.200 1.400M637.8 399.4l.8 -2" fill="none" stroke="#40e040" stroke-width=".6"/><polygon points="564.6,439.7 579.4,431.5 594.2,439.7 579.4,447.9" fill="#cf6a06" /><polygon points="564.6,439.7 579.4,447.9 594.2,439.7 594.2,440.6 579.4,448.9 564.6,440.6" fill="#b25804" /><polygon points="568.2,434.5 579.4,440.7 579.4,445.1 568.2,438.9" fill="#d8700a" /><polygon points="590.6,434.5 579.4,440.7 579.4,445.1 590.6,438.9" fill="#cf6a06" /><polygon points="568.2,434.5 579.4,428.3 590.6,434.5 579.4,440.7" fill="#ea800e" stroke="#ea800e" stroke-width="1" stroke-linejoin="round"/><path d="M581.4 431.5l3.5 -.8 -.6 3.200 -2.400 .6z" fill="#20e020"/><path d="M573.9 435.5l1.500 -1.600 1.200 1.400M577 436.9l.8 -2" fill="none" stroke="#40e040" stroke-width=".6"/><polygon points="518,464.7 532.8,456.5 547.6,464.7 532.8,472.9" fill="#cf6a06" /><polygon points="518,464.7 532.8,472.9 547.6,464.7 547.6,465.6 532.8,473.9 518,465.6" fill="#b25804" /><polygon points="521.6,459.5 532.8,465.7 532.8,470.1 521.6,463.9" fill="#d8700a" /><polygon points="544,459.5 532.8,465.7 532.8,470.1 544,463.9" fill="#cf6a06" /><polygon points="521.6,459.5 532.8,453.3 544,459.5 532.8,465.7" fill="#ea800e" stroke="#ea800e" stroke-width="1" stroke-linejoin="round"/><path d="M534.8 456.5l3.5 -.8 -.6 3.200 -2.400 .6z" fill="#20e020"/><path d="M527.3 460.5l1.500 -1.600 1.200 1.400M530.4 461.9l.8 -2" fill="none" stroke="#40e040" stroke-width=".6"/><polygon points="742.8,334.7 757.6,326.5 772.4,334.7 757.6,342.9" fill="#cf6a06" /><polygon points="742.8,334.7 757.6,342.9 772.4,334.7 772.4,335.6 757.6,343.9 742.8,335.6" fill="#b25804" /><polygon points="746.4,329.5 757.6,335.7 757.6,340.1 746.4,333.9" fill="#d8700a" /><polygon points="768.8,329.5 757.6,335.7 757.6,340.1 768.8,333.9" fill="#cf6a06" /><polygon points="746.4,329.5 757.6,323.3 768.8,329.5 757.6,335.7" fill="#ea800e" stroke="#ea800e" stroke-width="1" stroke-linejoin="round"/><path d="M759.6 326.5l3.5 -.8 -.6 3.200 -2.400 .6z" fill="#20e020"/><path d="M752.1 330.5l1.500 -1.600 1.200 1.400M755.2 331.9l.8 -2" fill="none" stroke="#40e040" stroke-width=".6"/><polygon points="834.5,388.7 849.3,380.5 864.1,388.7 849.3,396.9" fill="#cf6a06" /><polygon points="834.5,388.7 849.3,396.9 864.1,388.7 864.1,389.6 849.3,397.9 834.5,389.6" fill="#b25804" /><polygon points="838.1,383.5 849.3,389.7 849.3,394.1 838.1,387.9" fill="#d8700a" /><polygon points="860.5,383.5 849.3,389.7 849.3,394.1 860.5,387.9" fill="#cf6a06" /><polygon points="838.1,383.5 849.3,377.3 860.5,383.5 849.3,389.7" fill="#ea800e" stroke="#ea800e" stroke-width="1" stroke-linejoin="round"/><path d="M851.3 380.5l3.5 -.8 -.6 3.200 -2.400 .6z" fill="#20e020"/><path d="M843.8 384.5l1.500 -1.600 1.200 1.400M846.9 385.9l.8 -2" fill="none" stroke="#40e040" stroke-width=".6"/><polygon points="719,455.2 733.8,447 748.6,455.2 733.8,463.4" fill="#cf6a06" /><polygon points="719,455.2 733.8,463.4 748.6,455.2 748.6,456.1 733.8,464.4 719,456.1" fill="#b25804" /><polygon points="722.6,450 733.8,456.2 733.8,460.6 722.6,454.4" fill="#d8700a" /><polygon points="745,450 733.8,456.2 733.8,460.6 745,454.4" fill="#cf6a06" /><polygon points="722.6,450 733.8,443.8 745,450 733.8,456.2" fill="#ea800e" stroke="#ea800e" stroke-width="1" stroke-linejoin="round"/><path d="M735.8 447l3.5 -.8 -.6 3.200 -2.400 .6z" fill="#20e020"/><path d="M728.3 451l1.500 -1.600 1.200 1.400M731.4 452.4l.8 -2" fill="none" stroke="#40e040" stroke-width=".6"/><polygon points="896.6,474 911.4,465.8 926.2,474 911.4,482.2" fill="#cf6a06" /><polygon points="896.6,474 911.4,482.2 926.2,474 926.2,474.9 911.4,483.2 896.6,474.9" fill="#b25804" /><polygon points="900.2,468.8 911.4,475 911.4,479.4 900.2,473.2" fill="#d8700a" /><polygon points="922.6,468.8 911.4,475 911.4,479.4 922.6,473.2" fill="#cf6a06" /><polygon points="900.2,468.8 911.4,462.6 922.6,468.8 911.4,475" fill="#ea800e" stroke="#ea800e" stroke-width="1" stroke-linejoin="round"/><path d="M913.4 465.8l3.5 -.8 -.6 3.200 -2.400 .6z" fill="#20e020"/><path d="M905.9 469.8l1.500 -1.600 1.200 1.400M909 471.2l.8 -2" fill="none" stroke="#40e040" stroke-width=".6"/><polyline points="647.7,402.5 675.1,419 675.1,427.1" fill="none" stroke="#ff0000" stroke-width="0.8" stroke-linejoin="round" /><polyline points="649,402.24 676.4,418.74 676.4,426.84" fill="none" stroke="#0000ff" stroke-width="0.8" stroke-linejoin="round" /><polyline points="650.3,401.98 677.7,418.48 677.7,426.58" fill="none" stroke="#00e5e5" stroke-width="0.8" stroke-linejoin="round" /><polyline points="700,412 590.3,476.4" fill="none" stroke="#ff0000" stroke-width="0.8" stroke-linejoin="round" /><polyline points="701.2,411.76 591.5,476.16" fill="none" stroke="#ff8a8a" stroke-width="0.8" stroke-linejoin="round" /><polyline points="702.4,411.52 592.7,475.92" fill="none" stroke="#0000ff" stroke-width="0.8" stroke-linejoin="round" /><polyline points="703.6,411.28 593.9,475.68" fill="none" stroke="#00e5e5" stroke-width="0.8" stroke-linejoin="round" /><polyline points="541,464 560.2,476.4" fill="none" stroke="#ff0000" stroke-width="0.8" stroke-linejoin="round" /><polyline points="542.3,463.74 561.5,476.14" fill="none" stroke="#0000ff" stroke-width="0.8" stroke-linejoin="round" /><polyline points="543.6,463.48 562.8,475.88" fill="none" stroke="#00e5e5" stroke-width="0.8" stroke-linejoin="round" /><polyline points="749.4,336.2 731.9,346" fill="none" stroke="#ff0000" stroke-width="0.8" stroke-linejoin="round" /><polyline points="750.7,335.94 733.2,345.74" fill="none" stroke="#0000ff" stroke-width="0.8" stroke-linejoin="round" /><polyline points="752,335.68 734.5,345.48" fill="none" stroke="#00e5e5" stroke-width="0.8" stroke-linejoin="round" /><polyline points="840,389.2 800.6,413.5 800.6,418" fill="none" stroke="#ff0000" stroke-width="0.8" stroke-linejoin="round" /><polyline points="841.3,388.94 801.9,413.24 801.9,417.74" fill="none" stroke="#0000ff" stroke-width="0.8" stroke-linejoin="round" /><polyline points="842.6,388.68 803.2,412.98 803.2,417.48" fill="none" stroke="#00e5e5" stroke-width="0.8" stroke-linejoin="round" /><polyline points="740.7,454.7 776.3,475.3" fill="none" stroke="#ff0000" stroke-width="0.8" stroke-linejoin="round" /><polyline points="742,454.44 777.6,475.04" fill="none" stroke="#0000ff" stroke-width="0.8" stroke-linejoin="round" /><polyline points="743.3,454.18 778.9,474.78" fill="none" stroke="#00e5e5" stroke-width="0.8" stroke-linejoin="round" /><polyline points="847.4,451 877.3,467.8 892.3,460.3 903.5,465.9" fill="none" stroke="#ff0000" stroke-width="0.8" stroke-linejoin="round" /><polyline points="848.4,450.8 878.3,467.6 893.3,460.1 904.5,465.7" fill="none" stroke="#ff8a8a" stroke-width="0.8" stroke-linejoin="round" /><polyline points="849.4,450.6 879.3,467.4 894.3,459.9 905.5,465.5" fill="none" stroke="#00e5e5" stroke-width="0.8" stroke-linejoin="round" /><polyline points="664,434 720,402.3 725.7,404 750,393" fill="none" stroke="#ff0000" stroke-width="0.8" stroke-linejoin="round" /><polyline points="665.1,433.78 721.1,402.08 726.8,403.78 751.1,392.78" fill="none" stroke="#ff8a8a" stroke-width="0.8" stroke-linejoin="round" /><polyline points="666.2,433.56 722.2,401.86 727.9,403.56 752.2,392.56" fill="none" stroke="#0000ff" stroke-width="0.8" stroke-linejoin="round" /><polyline points="667.3,433.34 723.3,401.64 729,403.34 753.3,392.34" fill="none" stroke="#00e5e5" stroke-width="0.8" stroke-linejoin="round" /><polyline points="664,411.6 679,420.5 679,426" fill="none" stroke="#ff0000" stroke-width="0.8" stroke-linejoin="round" /><polyline points="665.2,411.36 680.2,420.26 680.2,425.76" fill="none" stroke="#0000ff" stroke-width="0.8" stroke-linejoin="round" /><polyline points="640,337.2 668.5,323" fill="none" stroke="#ff0000" stroke-width="1.2" stroke-linejoin="round" /><polyline points="381,134.75 409,118" fill="none" stroke="#c00000" stroke-width="1" stroke-linejoin="round" /><polyline points="391,118 418.5,134.5" fill="none" stroke="#00b000" stroke-width="1" stroke-linejoin="round" /><polyline points="399.75,118 399.75,144.75" fill="none" stroke="#0000d0" stroke-width="1" stroke-linejoin="round" /><rect x="397" y="120.700" width="5.600" height="5.600" fill="none" stroke="#d8d8d8" stroke-width="1"/><circle cx="955.5" cy="163" r="39.700" fill="#6c6d70"/><circle cx="955.5" cy="163" r="24.300" fill="#000"/><circle cx="955.5" cy="163" r="22" fill="#6c6d70"/><circle cx="955.5" cy="163" r="14.300" fill="#000"/><path d="M946.20 185.45L940.31 199.68A39.700 39.700 0 0 1 918.82 178.19L933.05 172.30A24.300 24.300 0 0 0 946.20 185.45z" fill="#0a5f86"/><path d="M976.75 171.80L992.92 178.50" stroke="#000" stroke-width="1.600"/><path d="M964.30 184.25L971.00 200.42" stroke="#000" stroke-width="1.600"/><path d="M946.70 184.25L940.00 200.42" stroke="#000" stroke-width="1.600"/><path d="M934.25 171.80L918.08 178.50" stroke="#000" stroke-width="1.600"/><path d="M934.25 154.20L918.08 147.50" stroke="#000" stroke-width="1.600"/><path d="M946.70 141.75L940.00 125.58" stroke="#000" stroke-width="1.600"/><path d="M964.30 141.75L971.00 125.58" stroke="#000" stroke-width="1.600"/><path d="M976.75 154.20L992.92 147.50" stroke="#000" stroke-width="1.600"/><path d="M932.5 163h9M969.5 163h9" stroke="#000" stroke-width="1.600"/><path d="M955.5 156.5l6 3v7l-6 3.200-6-3.200v-7z" fill="none" stroke="#e8e8e8" stroke-width=".9"/><path d="M949.5 159.5l6 3 6-3M955.5 162.5v7.200" fill="none" stroke="#e8e8e8" stroke-width=".8"/><path d="M949.5 159.5l6 3v7.200l-6-3.200z" fill="#9a9a9a"/><path d="M955.5 156.5v6M955.5 162.5l-6 3.500M955.5 162.5l6 3.500" stroke="#555" stroke-width=".6"/><rect x="1000.400" y="123" width="14" height="13.500" fill="#6c6d70" stroke="#858689" stroke-width=".7"/><rect x="1000.400" y="139.55" width="14" height="13.500" fill="#6c6d70" stroke="#858689" stroke-width=".7"/><rect x="1000.400" y="156.1" width="14" height="13.500" fill="#6c6d70" stroke="#858689" stroke-width=".7"/><rect x="1000.400" y="172.65" width="14" height="13.500" fill="#6c6d70" stroke="#858689" stroke-width=".7"/><rect x="1000.400" y="189.2" width="14" height="13.500" fill="#6c6d70" stroke="#858689" stroke-width=".7"/><path d="M1003.500 134v-5.500l4-3.200 4 3.200v5.500z" fill="#a8b4c0" stroke="#e8e8e8" stroke-width=".8"/><circle cx="1007.400" cy="146.400" r="4" fill="none" stroke="#7c8c9c" stroke-width="1"/><rect x="1002.500" y="142" width="2.200" height="2.200" fill="#2a8ac8"/><text x="1007.400" y="165.600" text-anchor="middle" font-family="Liberation Sans,sans-serif" font-size="6.400" fill="#c8c8c8">90</text><circle cx="1007.400" cy="179.500" r="4" fill="none" stroke="#7c8c9c" stroke-width="1"/><rect x="1010" y="175" width="2.200" height="2.200" fill="#2a8ac8"/><circle cx="1007.400" cy="196" r="2.600" fill="none" stroke="#2e2f32" stroke-width="2"/><circle cx="1007.400" cy="196" r="4" fill="none" stroke="#2e2f32" stroke-width="1.400" stroke-dasharray="1.300 1.840"/></svg>
<div style="position:absolute;left:666.75px;top:132px;width:232.8px;height:48.9px;background:#d2d2d2;border:1px solid #b4b4b4;box-shadow:1px 1px 2px rgba(0,0,0,.5)"></div>
<svg style="position:absolute;left:668.25px;top:133.5px;overflow:visible" width="16.5" height="18" viewBox="0 0 11 12" ><path d="M1 10.500l7-7.500" stroke="#fafafa" stroke-width="1.300"/><g fill="#f0a090"><rect x="7.600" y=".8" width="1" height="1"/><rect x="9.200" y="2" width="1" height="1"/><rect x="8.600" y="3.600" width=".9" height=".9"/><rect x="6.300" y="1.600" width=".8" height=".8"/></g></svg>
<div id="tt1" style="position:absolute;left:687.75px;top:135px;line-height:18px;font-size:10.800px;font-weight:bold;letter-spacing:-.35px;color:#111;white-space:nowrap">Wizard</div>
<div id="tt2" style="position:absolute;left:674.25px;top:157.95px;line-height:18px;font-size:10.600px;letter-spacing:-.42px;color:#1a1a1a;white-space:nowrap">Wizard: filter, isolate and modify multiple elements</div>

<!-- COMMAND WINDOW -->
<div style="position:absolute;left:0px;top:726px;width:1530px;height:3.9px;background:#323336"></div>
<div style="position:absolute;left:0px;top:729.45px;width:1536px;height:2.4px;background:#26272a"></div>
<div style="position:absolute;left:0px;top:731.4px;width:1530px;height:17.7px;background:#1c1d20"></div>
<div id="cmdt" style="position:absolute;left:3.45px;top:730.95px;line-height:18px;font-size:10.800px;font-weight:bold;letter-spacing:-.35px;color:#f0f0f0;white-space:nowrap">Command Window</div>
<div style="position:absolute;left:0px;top:749.1px;width:1515.45px;height:36.75px;background:#c0c0c0;border-left:1px solid #2a2a2a;border-bottom:1px solid #6a6a6a"></div>
<svg style="position:absolute;left:0px;top:750px;overflow:visible" width="9" height="36" viewBox="0 0 6 24" ><rect x="2.600" y="1" width=".9" height=".9" fill="#f4f4f4"/><rect x="2.600" y="3" width=".9" height=".9" fill="#f4f4f4"/><rect x="2.600" y="5" width=".9" height=".9" fill="#f4f4f4"/><rect x="2.600" y="7" width=".9" height=".9" fill="#f4f4f4"/><rect x="2.600" y="14.5" width=".9" height=".9" fill="#f4f4f4"/><rect x="2.600" y="16.5" width=".9" height=".9" fill="#f4f4f4"/><rect x="2.600" y="18.5" width=".9" height=".9" fill="#f4f4f4"/><rect x="2.600" y="20.5" width=".9" height=".9" fill="#f4f4f4"/></svg>
<div id="cmdtxt" style="position:absolute;left:10.2px;top:756px;line-height:18px;font-size:10.400px;letter-spacing:0;color:#f2f2f2;white-space:nowrap">FLM_PROPF</div>
<div style="position:absolute;left:4.5px;top:755.4px;line-height:18px;font-size:11px;color:#e8e8e8">:</div>
<div style="position:absolute;left:1515.45px;top:749.1px;width:14.55px;height:36.9px;background:#1c1d20"></div>
<div style="position:absolute;left:1516.5px;top:766.5px;width:12.9px;height:6.9px;background:#3e3f42"></div>
<svg style="position:absolute;left:1515.45px;top:749.1px;overflow:visible" width="14.55" height="36.9" viewBox="0 0 9.7 24.6" ><path d="M2.400 6.600l2.500-2.500 2.500 2.500z" fill="#f0f0f0"/><path d="M2.400 19l2.500 2.500 2.500-2.500z" fill="#f0f0f0"/></svg>
<svg style="position:absolute;left:1494px;top:732px;overflow:visible" width="36" height="16.5" viewBox="0 0 24 11" ><path d="M3.700 5h3.600v2.800H3.700z M4.700 5l.5-1.400h3.400l-.5 3.200h-.8" fill="none" stroke="#e8e8e8" stroke-width=".9"/><path d="M15.400 3.600l3.600 3.600m0-3.600l-3.600 3.600" stroke="#e8e8e8" stroke-width="1.100"/></svg>
<div style="position:absolute;left:0px;top:787.05px;width:1530px;height:12px;background:#c0c0c0"></div>
<div style="position:absolute;left:0px;top:786px;width:1530px;height:1.2px;background:#55565a"></div>
<svg style="position:absolute;left:0px;top:787.5px;overflow:visible" width="9" height="12" viewBox="0 0 6 8" ><rect x="2.600" y="0.8" width=".9" height=".9" fill="#f4f4f4"/><rect x="2.600" y="2.8" width=".9" height=".9" fill="#f4f4f4"/><rect x="2.600" y="4.8" width=".9" height=".9" fill="#f4f4f4"/></svg>
<div style="position:absolute;left:1530px;top:714.75px;width:6px;height:108px;background:#1b1c1f"></div>

<!-- STATUS BAR -->
<div style="position:absolute;left:0px;top:799.05px;width:1530px;height:22.95px;background:#2e2f32"></div>
<div id="sttxt" style="position:absolute;left:2.4px;top:804px;line-height:18px;font-size:10.600px;letter-spacing:-.42px;color:#e0e0e0;white-space:nowrap">Wizard: filter, isolate and modify multiple elements</div>
<div style="position:absolute;left:420px;top:804px;width:32.62px;height:18px;background:#3c3d40;border:1px solid #1e1f22;border-bottom:none;text-align:center;line-height:16.0px;font-size:10.600px;letter-spacing:-.42px;color:#e4e4e4;white-space:nowrap"><span class="sb">Snap</span></div>
<div style="position:absolute;left:458.25px;top:804px;width:28.12px;height:18px;background:#3c3d40;border:1px solid #1e1f22;border-bottom:none;text-align:center;line-height:16.0px;font-size:10.600px;letter-spacing:-.42px;color:#e4e4e4;white-space:nowrap"><span class="sb">Grid</span></div>
<div style="position:absolute;left:490.88px;top:804px;width:36px;height:18px;background:#222326;border:1px solid #1e1f22;border-bottom:none;text-align:center;line-height:16.0px;font-size:10.600px;letter-spacing:-.42px;color:#e4e4e4;white-space:nowrap"><span class="sb">Ortho</span></div>
<div style="position:absolute;left:533.25px;top:804px;width:32.25px;height:18px;background:#3c3d40;border:1px solid #1e1f22;border-bottom:none;text-align:center;line-height:16.0px;font-size:10.600px;letter-spacing:-.42px;color:#e4e4e4;white-space:nowrap"><span class="sb">Polar</span></div>
<div style="position:absolute;left:570.38px;top:804px;width:35.62px;height:18px;background:#222326;border:1px solid #1e1f22;border-bottom:none;text-align:center;line-height:16.0px;font-size:10.600px;letter-spacing:-.42px;color:#e4e4e4;white-space:nowrap"><span class="sb">ESnap</span></div>
<div style="position:absolute;left:611.25px;top:804px;width:36.75px;height:18px;background:#222326;border:1px solid #1e1f22;border-bottom:none;text-align:center;line-height:16.0px;font-size:10.600px;letter-spacing:-.42px;color:#e4e4e4;white-space:nowrap"><span class="sb">ETrack</span></div>
<div style="position:absolute;left:653.25px;top:804px;width:39.75px;height:18px;background:#222326;border:1px solid #1e1f22;border-bottom:none;text-align:center;line-height:16.0px;font-size:10.600px;letter-spacing:-.42px;color:#e4e4e4;white-space:nowrap"><span class="sb">QInput</span></div>
<div style="position:absolute;left:698.25px;top:804px;width:81.75px;height:18px;background:#3c3d40;border:1px solid #1e1f22;border-bottom:none;text-align:center;line-height:16.0px;font-size:10.600px;letter-spacing:-.42px;color:#e4e4e4;white-space:nowrap"><span class="sb">Cycling Selection</span></div>
<div style="position:absolute;left:785.7px;top:804px;width:43.65px;height:18px;background:#3c3d40;border:1px solid #1e1f22;border-bottom:none;text-align:center;line-height:16.0px;font-size:10.600px;letter-spacing:-.42px;color:#e4e4e4;white-space:nowrap"><span class="sb">LWeight</span></div>
<div style="position:absolute;left:834.9px;top:804px;width:39.9px;height:18px;background:#222326;border:1px solid #1e1f22;border-bottom:none;text-align:center;line-height:16.0px;font-size:10.600px;letter-spacing:-.42px;color:#e4e4e4;white-space:nowrap"><span class="sb">MODEL</span></div>
<div style="position:absolute;left:880.88px;top:804px;width:67.5px;height:18px;background:#222326;border:1px solid #1e1f22;border-bottom:none;text-align:center;line-height:16.0px;font-size:10.600px;letter-spacing:-.42px;color:#e4e4e4;white-space:nowrap"><span class="sb">Dynamic CCS</span></div>
<div style="position:absolute;left:954.45px;top:804px;width:49.05px;height:18px;background:#3c3d40;border:1px solid #1e1f22;border-bottom:none;text-align:center;line-height:16.0px;font-size:10.600px;letter-spacing:-.42px;color:#e4e4e4;white-space:nowrap"><span class="sb">AMonitor</span></div>
<div style="position:absolute;left:1009.35px;top:804px;width:76.35px;height:18px;background:#3c3d40;border:1px solid #1e1f22;border-bottom:none;line-height:16.0px;font-size:10.600px;letter-spacing:-.42px;color:#e4e4e4;white-space:nowrap;padding-left:4px"><span class="sb">Annotation</span></div>
<svg style="position:absolute;left:1071.75px;top:810px;overflow:visible" width="10.5" height="7.5" viewBox="0 0 7 5" ><path d="M.5 .6h5.600l-2.800 3.200z" fill="#f0f0f0"/></svg>
<div class="sb" style="position:absolute;left:1091.85px;top:804.3px;line-height:18px;font-size:10.600px;letter-spacing:-.42px;color:#e0e0e0;white-space:nowrap">(1:1)</div>
<div class="sb" style="position:absolute;left:1115.25px;top:804.3px;line-height:18px;font-size:10.600px;letter-spacing:-.7px;color:#e0e0e0;white-space:nowrap">(-32372.259,63612.799,0)</div>

</div>
</body>
</html>
